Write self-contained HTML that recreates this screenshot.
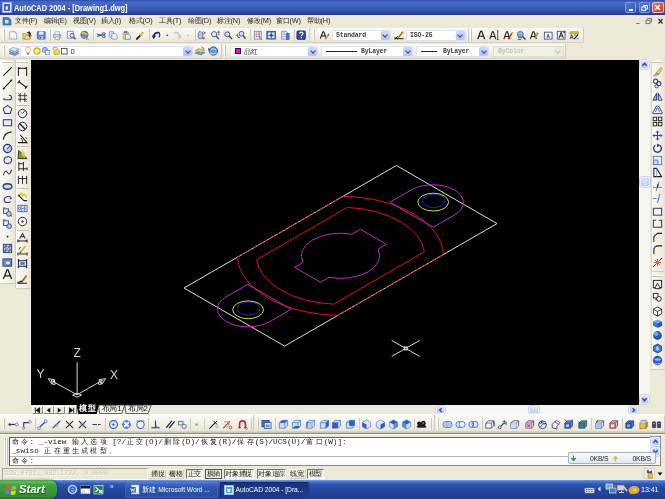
<!DOCTYPE html>
<html>
<head>
<meta charset="utf-8">
<title>AutoCAD 2004 - [Drawing1.dwg]</title>
<style>
*{margin:0;padding:0;box-sizing:border-box}
html,body{width:665px;height:499px;overflow:hidden;background:#ece9d8}
body{position:relative;font-family:"Liberation Sans",sans-serif;font-size:8px;color:#000}
.abs{position:absolute}
#w{position:absolute;left:0;top:0;width:665px;height:499px;will-change:transform;filter:blur(0.5px)}
svg{position:absolute;overflow:visible}
#title{left:0;top:0;width:665px;height:15px;background:linear-gradient(#2c4ca8 0%,#4468c6 12%,#4466c4 30%,#3659b6 60%,#2b4ba5 85%,#1d378a 100%)}
#title .t{left:14px;top:2px;color:#fff;font-weight:bold;font-size:9.6px;line-height:11px;white-space:nowrap;transform:scaleX(0.775);transform-origin:0 0}
#menubar{left:0;top:15px;width:665px;height:12px;background:#ece9d8}
#menubar span{position:absolute;top:1px;font-size:7.3px;line-height:10px;white-space:nowrap;letter-spacing:-0.2px;color:#222}
.grip{position:absolute;width:2px;border-left:1px solid #fff;border-right:1px solid #c6c3b2}
.gripH{position:absolute;height:2px;border-top:1px solid #fff;border-bottom:1px solid #c6c3b2}
.sep{position:absolute;width:1px;background:#cfccbc}
.sepH{position:absolute;height:1px;background:#c5c2b2}
.combo{position:absolute;background:#fff;border:1px solid #dde4f0;color:#333;height:11px;font-size:6.5px;line-height:9px;white-space:nowrap}
.combo .arr{position:absolute;right:0;top:0;width:9px;height:9px;background:linear-gradient(#cbd9fb,#b1c6f7);border-radius:1.5px}
.combo .arr:after{content:"";position:absolute;left:2.5px;top:2px;width:3px;height:3px;border-right:1.2px solid #34458a;border-bottom:1.2px solid #34458a;transform:rotate(45deg)}
.combo.dis{background:#f3f1e7;border-color:#dedbcc}
.combo.dis .arr{background:#ebe9de}
.combo.dis .arr:after{border-color:#c5c2b2}
.band{position:absolute;background:linear-gradient(#fbfaf6 0%,#f3f1e8 50%,#e8e5d5 100%);border-right:1px solid #cfccbc;border-bottom:1px solid #d5d2c2;border-radius:0 1px 1px 0}
.mono{font-family:"Liberation Mono",monospace}
.combo .mono{font-weight:bold;color:#3c3c3c;letter-spacing:-0.15px}
#canvas{left:31px;top:59.6px;width:608px;height:345px;background:#000;overflow:hidden}
.ucs{color:#d8d8d8;font-size:12px;line-height:12px;width:10px;text-align:center}
#tabsrow{left:31px;top:405px;width:608px;height:9px;background:#ece9d8}
.sbtn{position:absolute;background:linear-gradient(#cfdcfd,#b4c8f6);border:1px solid #eef3ff;border-radius:2px;box-shadow:0 0 0 0.5px #9db0dc}
#cmd{left:9px;top:436.7px;width:641px;height:29px;background:#fff;border:1px solid #8a887c;border-left:1.6px solid #55554f;border-top:1.2px solid #66665f;border-right:none;overflow:hidden}
#cmd div{position:absolute;left:1.2px;font-size:7.67px;line-height:9px;white-space:nowrap;color:#1a1a1a}
#status{left:0;top:466px;width:665px;height:14px}
.sb{position:absolute;top:2.5px;height:10.5px;font-size:6.9px;line-height:8.5px;text-align:center;white-space:nowrap;border:1px solid;border-color:#f6f5ee #d5d2c3 #d5d2c3 #f6f5ee;color:#222}
.sb.on{border-color:#77756a #fbfaf5 #fbfaf5 #77756a;background:#f3f1e8}
.sb.on2{border-color:#55534a;background:#f3f1e8}
#taskbar{left:0;top:480px;width:665px;height:19px;background:linear-gradient(#7f9ee2 0%,#5078ce 8%,#3059b8 20%,#27489f 45%,#234294 75%,#1f3b88 100%)}
#start{left:0;top:0;width:56.5px;height:19px;border-radius:0 7px 7px 0;background:linear-gradient(#4a9c4a 0%,#62bc62 10%,#40a240 25%,#389838 60%,#318a31 88%,#287228 100%);box-shadow:1px 0 2px #1a3f8a}
#start span{position:absolute;left:19px;top:2.5px;color:#fff;font-weight:bold;font-style:italic;font-size:11.5px;line-height:13px;text-shadow:0.5px 0.5px 1px #1a4a1a;letter-spacing:-0.1px}
.task{position:absolute;top:2px;height:15.5px;border-radius:2px;color:#fff;font-size:6.7px;line-height:15px;white-space:nowrap;overflow:hidden;padding-left:16.5px;letter-spacing:-0.05px}
</style>
</head>
<body>
<div id="w">
<div id="title" class="abs">
<svg style="left:2px;top:2px" width="10" height="11" viewBox="0 0 10 11"><rect x="0.5" y="0.5" width="9" height="10" fill="#e8eef8" stroke="#9fb3dd" stroke-width="0.6"/><rect x="2" y="2" width="6" height="7" fill="#3b62b8"/><path d="M3.6 4.3 h2.4 v3.3 h-2.4 z" fill="#dfe8f8"/></svg>
<div class="t abs">AutoCAD 2004 - [Drawing1.dwg]</div>
<div class="abs" style="left:625px;top:2px;width:11px;height:11px;border-radius:2px;background:linear-gradient(135deg,#4f78d4,#3158bc);border:0.6px solid rgba(225,235,255,0.38)"></div><div class="abs" style="left:628.5px;top:9px;width:4px;height:1.6px;background:#fff"></div>
<div class="abs" style="left:639px;top:2px;width:11px;height:11px;border-radius:2px;background:linear-gradient(135deg,#4f78d4,#3158bc);border:0.6px solid rgba(225,235,255,0.38)"></div>
<svg style="left:639px;top:2px" width="11" height="11" viewBox="0 0 11 11" fill="none" stroke="#fff" stroke-width="1"><path d="M4.5 3.5 h4 v3.5 h-1.3 M4.5 3.5 v1.3"/><rect x="2.7" y="5" width="4" height="3.3"/></svg>
<div class="abs" style="left:652px;top:1.7px;width:11.6px;height:11.8px;border-radius:2px;background:linear-gradient(135deg,#e8705a,#cc3a20);border:0.6px solid rgba(255,225,215,0.75)"></div>
<svg style="left:652.3px;top:2.1px" width="11" height="11" viewBox="0 0 11 11" fill="none" stroke="#fff" stroke-width="1.6"><path d="M3 3 L8 8 M8 3 L3 8"/></svg>
</div>
<div id="menubar" class="abs">
<svg style="left:2px;top:1px" width="10" height="10" viewBox="0 0 10 10"><path d="M1 1.5 h5.5 l2.5 2.2 v5.3 h-8 z" fill="#3f79c8" stroke="#2a5aa0" stroke-width="0.6"/><path d="M3 4 h3.5 v3.5 h-3.5 z" fill="#cfe2f8"/></svg>
<span style="left:15px"><i style="display:inline-block;font-style:normal;text-align:center;vertical-align:top;width:6.8px">文</i><i style="display:inline-block;font-style:normal;text-align:center;vertical-align:top;width:6.8px">件</i>(F)</span>
<span style="left:44px"><i style="display:inline-block;font-style:normal;text-align:center;vertical-align:top;width:6.8px">编</i><i style="display:inline-block;font-style:normal;text-align:center;vertical-align:top;width:6.8px">辑</i>(E)</span>
<span style="left:73px"><i style="display:inline-block;font-style:normal;text-align:center;vertical-align:top;width:6.8px">视</i><i style="display:inline-block;font-style:normal;text-align:center;vertical-align:top;width:6.8px">图</i>(V)</span>
<span style="left:101px"><i style="display:inline-block;font-style:normal;text-align:center;vertical-align:top;width:6.8px">插</i><i style="display:inline-block;font-style:normal;text-align:center;vertical-align:top;width:6.8px">入</i>(I)</span>
<span style="left:129px"><i style="display:inline-block;font-style:normal;text-align:center;vertical-align:top;width:6.8px">格</i><i style="display:inline-block;font-style:normal;text-align:center;vertical-align:top;width:6.8px">式</i>(O)</span>
<span style="left:159px"><i style="display:inline-block;font-style:normal;text-align:center;vertical-align:top;width:6.8px">工</i><i style="display:inline-block;font-style:normal;text-align:center;vertical-align:top;width:6.8px">具</i>(T)</span>
<span style="left:188px"><i style="display:inline-block;font-style:normal;text-align:center;vertical-align:top;width:6.8px">绘</i><i style="display:inline-block;font-style:normal;text-align:center;vertical-align:top;width:6.8px">图</i>(D)</span>
<span style="left:217px"><i style="display:inline-block;font-style:normal;text-align:center;vertical-align:top;width:6.8px">标</i><i style="display:inline-block;font-style:normal;text-align:center;vertical-align:top;width:6.8px">注</i>(N)</span>
<span style="left:247px"><i style="display:inline-block;font-style:normal;text-align:center;vertical-align:top;width:6.8px">修</i><i style="display:inline-block;font-style:normal;text-align:center;vertical-align:top;width:6.8px">改</i>(M)</span>
<span style="left:276px"><i style="display:inline-block;font-style:normal;text-align:center;vertical-align:top;width:6.8px">窗</i><i style="display:inline-block;font-style:normal;text-align:center;vertical-align:top;width:6.8px">口</i>(W)</span>
<span style="left:307px"><i style="display:inline-block;font-style:normal;text-align:center;vertical-align:top;width:6.8px">帮</i><i style="display:inline-block;font-style:normal;text-align:center;vertical-align:top;width:6.8px">助</i>(H)</span>
<svg style="left:633px;top:2px" width="32" height="9" viewBox="0 0 32 9" fill="none" stroke="#555" stroke-width="1"><path d="M3 6.5 h3.5" stroke="#777"/><path d="M14.5 1.5 h4 v3.5 h-1 M14.5 1.5 v1.2" stroke="#777"/><rect x="13" y="3.3" width="4" height="3.3" stroke="#777"/><path d="M25.5 2 L29.5 6.5 M29.5 2 L25.5 6.5" stroke="#333" stroke-width="1.2"/></svg>
</div>
<div class="band" style="left:0.0px;top:27.5px;width:310.0px;height:15.0px"></div>
<div class="band" style="left:311.0px;top:27.5px;width:158.0px;height:15.0px"></div>
<div class="band" style="left:469.0px;top:27.5px;width:115.0px;height:15.0px"></div>
<div class="band" style="left:0.0px;top:43.5px;width:222.0px;height:15.5px"></div>
<div class="band" style="left:223.0px;top:43.5px;width:342.5px;height:15.5px"></div>
<div class="grip" style="left:3px;top:29px;height:12px"></div>
<svg style="left:8.3px;top:30.0px" width="10.4" height="10.4" viewBox="0 0 12 12" fill="none"><path d="M2 2 h6 l2 2 v6.5 h-8 z" fill="#fdfeff" stroke="#7d9fd8" stroke-width="0.9"/><path d="M3 8.5 h6 v1.5 h-6 z" fill="#c9daf4"/><path d="M8 2 v2 h2" stroke="#7d9fd8" stroke-width="0.6"/></svg>
<svg style="left:22.3px;top:30.0px" width="10.4" height="10.4" viewBox="0 0 12 12" fill="none"><path d="M1 4 h3 l1 1 h4.5 v5.5 h-8.5 z" fill="#ecd27a" stroke="#a08a3c" stroke-width="0.8"/><path d="M2.5 10.3 l2 -4 h6.5 l-2 4 z" fill="#f6e6a4" stroke="#a08a3c" stroke-width="0.7"/><path d="M5 3 l4 -1.5 l1.5 3 l-1.5 4.5 l-1.5 -2 l1 -2.5 z" fill="#3a3428"/></svg>
<svg style="left:35.8px;top:30.0px" width="10.4" height="10.4" viewBox="0 0 12 12" fill="none"><path d="M1.5 2 h9 v8.5 h-8 l-1 -1 z" fill="#5f88d0" stroke="#3a5a9c" stroke-width="0.9"/><rect x="3.3" y="1.8" width="5.4" height="3.6" fill="#e9f0fb"/><rect x="4" y="7.3" width="4.3" height="3" fill="#b9cdf0"/><rect x="4.7" y="7.9" width="1.2" height="2" fill="#27478e"/></svg>
<svg style="left:52.3px;top:30.0px" width="10.4" height="10.4" viewBox="0 0 12 12" fill="none"><path d="M3.5 5 v-3 h5 v3" fill="#fff" stroke="#8c9cb8" stroke-width="0.8"/><rect x="1.8" y="5" width="8.4" height="3.8" rx="0.8" fill="#d3dcec" stroke="#6a7ca8" stroke-width="0.8"/><path d="M3.5 8 h5 v2.8 h-5 z" fill="#fff" stroke="#6b7c98" stroke-width="0.7"/><circle cx="9" cy="6.4" r="0.6" fill="#3a9a3a"/></svg>
<svg style="left:65.8px;top:30.0px" width="10.4" height="10.4" viewBox="0 0 12 12" fill="none"><path d="M1.5 1.5 h7 v8 h-7 z" fill="#f4f8ff" stroke="#5b84c9" stroke-width="0.9"/><circle cx="7" cy="6.3" r="2.4" fill="#cfe0f8" stroke="#2b4a8c" stroke-width="0.9"/><path d="M8.8 8.2 l2.2 2.5" stroke="#2b4a8c" stroke-width="1.4"/></svg>
<svg style="left:78.8px;top:30.0px" width="10.4" height="10.4" viewBox="0 0 12 12" fill="none"><circle cx="6.3" cy="5.6" r="4.2" fill="#5d8fdc" stroke="#2b4a8c" stroke-width="0.8"/><path d="M3 4 q2 -2 4 0 q1.5 1.5 3 0.5" stroke="#f0c040" stroke-width="1.6"/><path d="M2.5 8 q3 1.5 5 -0.5" stroke="#e8803a" stroke-width="1.6"/><path d="M6 8 l5 2.5 l-3 0.5 z" fill="#fff" stroke="#2b4a8c" stroke-width="0.5"/></svg>
<svg style="left:95.8px;top:30.0px" width="10.4" height="10.4" viewBox="0 0 12 12" fill="none"><path d="M1 4.5 l6 2 M1 7.5 l6 -2" stroke="#1d3a7a" stroke-width="1.1"/><ellipse cx="9" cy="4.4" rx="1.7" ry="1.2" stroke="#1d3a7a" stroke-width="1"/><ellipse cx="9" cy="7.6" rx="1.7" ry="1.2" stroke="#1d3a7a" stroke-width="1"/></svg>
<svg style="left:108.3px;top:30.0px" width="10.4" height="10.4" viewBox="0 0 12 12" fill="none"><path d="M1.5 2 h5 v6 h-5 z" fill="#dbe7fa" stroke="#6a90d4" stroke-width="0.9"/><path d="M4.5 4.2 h4 l2 1.6 v4.7 h-6 z" fill="#f6f9ff" stroke="#6a90d4" stroke-width="0.9"/></svg>
<svg style="left:120.8px;top:30.0px" width="10.4" height="10.4" viewBox="0 0 12 12" fill="none"><path d="M2.5 3 h6.5 v7.5 h-6.5 z" fill="#ead48a" stroke="#a8985c" stroke-width="0.8"/><rect x="4" y="1.3" width="3" height="2" fill="#8c94a4" stroke="#4c5464" stroke-width="0.5"/><path d="M5 5 h4 l1.7 1.4 v4.3 h-5.7 z" fill="#eef4ff" stroke="#4a74c0" stroke-width="0.8"/></svg>
<svg style="left:134.8px;top:30.0px" width="10.4" height="10.4" viewBox="0 0 12 12" fill="none"><path d="M2 10.5 l4.2 -4.2" stroke="#1a1a1a" stroke-width="2"/><path d="M6 6.5 l3.5 -4" stroke="#d8b040" stroke-width="2.2"/><path d="M1.5 11 l1.5 -1.5" stroke="#1a1a1a" stroke-width="1.2"/></svg>
<svg style="left:150.8px;top:30.0px" width="10.4" height="10.4" viewBox="0 0 12 12" fill="none"><path d="M3.2 8.5 q-0.5 -6 6.3 -5.5" stroke="#1a2a5e" stroke-width="2"/><path d="M0.8 6.3 l2.4 4.3 l2.6 -4.3 z" fill="#1a2a5e"/><path d="M9.3 3 q1.8 2.5 0 5.5" stroke="#1a2a5e" stroke-width="1.3"/></svg>
<svg style="left:161.8px;top:30.0px" width="10.4" height="10.4" viewBox="0 0 12 12" fill="none"><path d="M4.5 5.5 h3 l-1.5 1.8 z" fill="#222"/></svg>
<svg style="left:172.3px;top:30.0px" width="10.4" height="10.4" viewBox="0 0 12 12" fill="none"><path d="M9 8.5 q0.5 -6 -6.5 -5.5" stroke="#c9c7ba" stroke-width="1.8"/><path d="M11.2 6.5 l-2.4 4 l-2.4 -4 z" fill="#c9c7ba"/></svg>
<svg style="left:183.3px;top:30.0px" width="10.4" height="10.4" viewBox="0 0 12 12" fill="none"><path d="M4.5 5.5 h3 l-1.5 1.8 z" fill="#b8b5a6"/></svg>
<svg style="left:196.3px;top:30.0px" width="10.4" height="10.4" viewBox="0 0 12 12" fill="none"><path d="M2.5 6 q0 -3 1.2 -3 v-1 q1 -0.8 1.5 0.3 q1 -0.8 1.5 0.4 q1.2 -0.4 1.3 1 v4 q0 2.5 -2.5 2.5 h-1 q-1.5 0 -2 -2 z" fill="#b8c8ea" stroke="#3a4a8c" stroke-width="0.8"/><path d="M8.5 2 l2.5 1.3 l-2.5 1.3" stroke="#cc2a2a" stroke-width="1"/><path d="M9 8 v3 M7.5 9.5 h3" stroke="#cc2a2a" stroke-width="0.9"/></svg>
<svg style="left:209.8px;top:30.0px" width="10.4" height="10.4" viewBox="0 0 12 12" fill="none"><circle cx="4.8" cy="4.8" r="3" fill="#e6eefb" stroke="#2b4a8c" stroke-width="1"/><path d="M7 7 l3.3 3.5" stroke="#2b4a8c" stroke-width="1.5"/><path d="M8.5 2.5 h3 M10 1 v3" stroke="#3a3a3a" stroke-width="0.8"/><path d="M8.8 5.5 h2.5" stroke="#3a3a3a" stroke-width="0.8"/></svg>
<svg style="left:223.3px;top:30.0px" width="10.4" height="10.4" viewBox="0 0 12 12" fill="none"><rect x="1" y="1" width="6" height="5" stroke="#7a8ab0" stroke-width="0.6" stroke-dasharray="1 1"/><circle cx="5" cy="5" r="2.8" fill="#d3e2f8" stroke="#2b4a8c" stroke-width="1"/><path d="M7 7 l3.5 3.5" stroke="#2b4a8c" stroke-width="1.6"/></svg>
<svg style="left:236.3px;top:30.0px" width="10.4" height="10.4" viewBox="0 0 12 12" fill="none"><circle cx="6.3" cy="4.3" r="2.8" fill="#d3e2f8" stroke="#2b4a8c" stroke-width="1"/><path d="M8.2 6.3 l2.7 3.8" stroke="#2b4a8c" stroke-width="1.6"/><path d="M1 5.5 q0.5 4 4 3.5" stroke="#2b4a8c" stroke-width="1"/><path d="M0.5 6.5 l1 -2 l1.5 1.8" fill="#2b4a8c"/></svg>
<svg style="left:253.3px;top:30.0px" width="10.4" height="10.4" viewBox="0 0 12 12" fill="none"><rect x="1.5" y="1.5" width="8" height="9" fill="#f4f7fd" stroke="#5870a8" stroke-width="0.8"/><path d="M3 3.5 h2 M3 5.5 h2 M3 7.5 h2" stroke="#cc3a3a" stroke-width="1"/><path d="M6 3.5 h2.5 M6 5.5 h2.5 M6 7.5 h2.5" stroke="#3a5ab0" stroke-width="1"/><path d="M7 8 l3.5 3" stroke="#b89020" stroke-width="1.4"/></svg>
<svg style="left:266.3px;top:30.0px" width="10.4" height="10.4" viewBox="0 0 12 12" fill="none"><rect x="1" y="1.5" width="10" height="9" fill="#4d78c8" stroke="#23407c" stroke-width="0.8"/><path d="M2.5 3 h3 v3 h-3 z M6.8 3 h3 v3 h-3 z M2.5 7 h3 v2.5 h-3 z M6.8 7 h3 v2.5 h-3 z" fill="#dce8fa"/><circle cx="6.2" cy="6.2" r="1.6" fill="#23407c"/></svg>
<svg style="left:279.8px;top:30.0px" width="10.4" height="10.4" viewBox="0 0 12 12" fill="none"><path d="M2 1.5 h5 l1.5 1.5 v7.5 h-6.5 z" fill="#f4f7fd" stroke="#5870a8" stroke-width="0.8"/><path d="M3 3.5 h3 M3 5.5 h4 M3 7.5 h4" stroke="#7a98d0" stroke-width="0.9"/><rect x="7.5" y="4" width="3" height="7" fill="#4d78c8" stroke="#23407c" stroke-width="0.6"/></svg>
<svg style="left:296.3px;top:30.0px" width="10.4" height="10.4" viewBox="0 0 12 12" fill="none"><rect x="1" y="1" width="10" height="10" rx="1.5" fill="#2a4a9c" stroke="#1b3070" stroke-width="0.8"/><path d="M4.2 4.4 q0 -1.9 1.9 -1.9 q1.9 0 1.9 1.6 q0 1 -1.1 1.6 q-0.7 0.4 -0.7 1.4" stroke="#fff" stroke-width="1.4"/><circle cx="6.1" cy="9" r="0.85" fill="#fff"/></svg>
<div class="sep" style="left:49.5px;top:29px;height:12px"></div>
<div class="sep" style="left:92.5px;top:29px;height:12px"></div>
<div class="sep" style="left:148.5px;top:29px;height:12px"></div>
<div class="sep" style="left:194.5px;top:29px;height:12px"></div>
<div class="sep" style="left:250.0px;top:29px;height:12px"></div>
<div class="sep" style="left:293.5px;top:29px;height:12px"></div>
<div class="grip" style="left:313px;top:29px;height:12px"></div>
<svg style="left:319.3px;top:30.0px" width="10.4" height="10.4" viewBox="0 0 12 12" fill="none"><path d="M1.5 10 l3 -8 h1 l3 8 M3 7 h4" stroke="#1a1a1a" stroke-width="1.2"/><path d="M7 10.5 l4 -5" stroke="#c89828" stroke-width="1.6"/><path d="M10.5 6.2 l0.9 -1.8" stroke="#555" stroke-width="1.2"/></svg>
<div class="combo " style="left:332.0px;top:29.5px;width:58.5px"><span class="mono" style="position:absolute;left:3px;top:0">Standard</span><div class="arr"></div></div>
<svg style="left:393.8px;top:30.0px" width="10.4" height="10.4" viewBox="0 0 12 12" fill="none"><path d="M1 10 h10 M1 10 l3.5 -2.5 l1 1 l4.5 -6.5" stroke="#1a1a1a" stroke-width="1.1"/><path d="M6 7.5 l4.5 -5.5" stroke="#a88018" stroke-width="1.8"/><path d="M1 8 v3 M4 9 v2" stroke="#1a1a1a" stroke-width="0.8"/></svg>
<div class="combo " style="left:406.0px;top:29.5px;width:59.5px"><span class="mono" style="position:absolute;left:3px;top:0">ISO-25</span><div class="arr"></div></div>
<div class="grip" style="left:470px;top:29px;height:12px"></div>
<svg style="left:476.3px;top:30.0px" width="10.4" height="10.4" viewBox="0 0 12 12" fill="none"><path d="M2 10.5 l3.3 -9 h1.4 l3.3 9 M3.6 7.2 h4.8" stroke="#1a1a1a" stroke-width="1.4"/></svg>
<svg style="left:488.8px;top:30.0px" width="10.4" height="10.4" viewBox="0 0 12 12" fill="none"><path d="M1 10.5 l2.8 -8.5 h1.2 l2.8 8.5 M2.4 7.4 h4" stroke="#1a1a1a" stroke-width="1.2"/><path d="M10 1 v10 M9 1 h2 M9 11 h2" stroke="#1a1a1a" stroke-width="0.8"/></svg>
<svg style="left:502.8px;top:30.0px" width="10.4" height="10.4" viewBox="0 0 12 12" fill="none"><path d="M1 10.5 l3 -8.5 h1.2 l2.8 8.5 M2.6 7.4 h4" stroke="#1a1a1a" stroke-width="1.2"/><path d="M6 10.5 l4.5 -7" stroke="#c82a1a" stroke-width="1.5"/><path d="M10.5 3.8 l0.8 -1.6" stroke="#d8a828" stroke-width="1.4"/></svg>
<svg style="left:516.3px;top:30.0px" width="10.4" height="10.4" viewBox="0 0 12 12" fill="none"><circle cx="5" cy="5" r="3.4" fill="#7fb0e0" stroke="#3a5a9c" stroke-width="0.9"/><path d="M3 4.5 q2 -2 4 0.5" stroke="#e8c040" stroke-width="1.2"/><path d="M7.5 7.5 l3.5 3.5" stroke="#2b3a6c" stroke-width="1.6"/><path d="M2 9 h5 M2 11 h4" stroke="#1a1a1a" stroke-width="0.7"/></svg>
<svg style="left:529.3px;top:30.0px" width="10.4" height="10.4" viewBox="0 0 12 12" fill="none"><path d="M1.5 10.5 l3 -8.5 h1.2 l2.8 8.5 M3 7.4 h4" stroke="#1a1a1a" stroke-width="1.2"/><path d="M6.5 9.5 l4 -5.5" stroke="#b88a18" stroke-width="1.5"/><path d="M7 5 q2 -3 4 -1" stroke="#3a5ab0" stroke-width="0.8"/></svg>
<svg style="left:542.8px;top:30.0px" width="10.4" height="10.4" viewBox="0 0 12 12" fill="none"><rect x="1.5" y="2.5" width="9" height="8" fill="#f4f7fd" stroke="#23407c" stroke-width="0.9"/><path d="M4.5 9 l1.5 -4 l1.5 4 M5 7.8 h2" stroke="#1a1a1a" stroke-width="0.8"/></svg>
<svg style="left:556.3px;top:30.0px" width="10.4" height="10.4" viewBox="0 0 12 12" fill="none"><rect x="1.5" y="1.5" width="9" height="9" fill="#f4f7fd" stroke="#23407c" stroke-width="0.9"/><path d="M3.5 9.5 l2.5 -7 l2.5 7 M4.5 7 h3" stroke="#1a1a1a" stroke-width="1.1"/><rect x="8.5" y="1" width="2.5" height="2.5" fill="#3a5ab0"/></svg>
<svg style="left:569.3px;top:30.0px" width="10.4" height="10.4" viewBox="0 0 12 12" fill="none"><path d="M1 2 h10 v2.5 h-10 z" fill="#d8c040" stroke="#8a7818" stroke-width="0.6"/><path d="M1 10.5 l2 -5 l2 5 M2 9 h2" stroke="#1a1a1a" stroke-width="0.9"/><path d="M6 10.5 l4.5 -5.5" stroke="#1a1a1a" stroke-width="1.3"/><path d="M6 6 h2 M9 10 h2" stroke="#3a5ab0" stroke-width="1"/></svg>
<div class="grip" style="left:3px;top:45px;height:12px"></div>
<svg style="left:7.5px;top:45.0px" width="12" height="12" viewBox="0 0 12 12" fill="none"><path d="M1 8.5 l4 -2 l6 1.5 l-4 2.5 z" fill="#7a9ad8" stroke="#3a5a9c" stroke-width="0.5"/><path d="M1 6.5 l4 -2 l6 1.5 l-4 2.5 z" fill="#a8c0ec" stroke="#3a5a9c" stroke-width="0.5"/><path d="M1 4.5 l4 -2 l6 1.5 l-4 2.5 z" fill="#dce6f8" stroke="#5a7ab8" stroke-width="0.5"/></svg>
<div class="combo " style="left:20.0px;top:45.5px;width:173.0px"><svg style="left:1.5px;top:-0.5px" width="10" height="10" viewBox="0 0 12 12" fill="none"><path d="M6 1.2 q3 0 3 2.8 q0 1.5 -1.2 2.6 v1.4 h-3.6 v-1.4 q-1.2 -1.1 -1.2 -2.6 q0 -2.8 3 -2.8 z" fill="#fffbe0" stroke="#b8a040" stroke-width="0.7"/><rect x="4.6" y="8.2" width="2.8" height="2.3" fill="#8a8a8a"/></svg><svg style="left:10.8px;top:-0.5px" width="10" height="10" viewBox="0 0 12 12" fill="none"><circle cx="6" cy="6" r="4" fill="#f6e040" stroke="#a89018" stroke-width="0.9"/><circle cx="6" cy="6" r="1.8" fill="#fbf4a0"/></svg><svg style="left:19.8px;top:-0.5px" width="10" height="10" viewBox="0 0 12 12" fill="none"><circle cx="4.8" cy="4.8" r="3.3" fill="#a8c0e8" stroke="#5a78b8" stroke-width="0.8"/><rect x="5.5" y="5.5" width="5" height="5" fill="#e4ecf8" stroke="#5a78b8" stroke-width="0.7"/></svg><svg style="left:29.8px;top:-0.5px" width="10" height="10" viewBox="0 0 12 12" fill="none"><path d="M2 4.5 q0 -3 3 -3 q2.5 0 2.8 2" stroke="#a89018" stroke-width="1.1"/><rect x="3.5" y="4.5" width="6.5" height="6" rx="1" fill="#f0d850" stroke="#a89018" stroke-width="0.8"/></svg><svg style="left:39.4px;top:0.5px" width="8.5" height="8.5" viewBox="0 0 12 12" fill="none"><rect x="2" y="2" width="8" height="8" fill="#fff" stroke="#4a4a4a" stroke-width="1.3"/></svg><span style="position:absolute;left:49.5px;top:0;font-size:7.5px;color:#222">0</span><div class="arr"></div></div>
<svg style="left:194.0px;top:45.0px" width="12" height="12" viewBox="0 0 12 12" fill="none"><path d="M1 8 l4 -2 l6 1.5 l-4 2.5 z" fill="#7a9ad8" stroke="#3a5a9c" stroke-width="0.5"/><path d="M1 5.5 l4 -2 l6 1.5 l-4 2.5 z" fill="#e0d060" stroke="#8a8020" stroke-width="0.5"/><path d="M7 1 l3.5 2.5 l-1.5 0.3 z" fill="#2b4a8c"/></svg>
<svg style="left:207.0px;top:45.0px" width="12" height="12" viewBox="0 0 12 12" fill="none"><circle cx="6.5" cy="6" r="4.2" fill="#6d96d8" stroke="#2b4a8c" stroke-width="0.8"/><path d="M3 5 q3 -3 6 0 M3 8 q3 2 6.5 0" stroke="#cfe0f8" stroke-width="1"/><path d="M1 3 l3 1.5 l-2.5 1.5 z" fill="#2b4a8c"/></svg>
<div class="grip" style="left:224px;top:45px;height:12px"></div>
<div class="combo " style="left:230.0px;top:45.5px;width:88.0px"><div style="position:absolute;left:4px;top:1.5px;width:6px;height:6px;background:#d81ad8;border:0.7px solid #3a0a3a"></div><span style="position:absolute;left:13px;top:0;font-size:7px;color:#222"><i style="display:inline-block;font-style:normal;text-align:center;vertical-align:top;width:6.6px">品</i><i style="display:inline-block;font-style:normal;text-align:center;vertical-align:top;width:6.6px">红</i></span><div class="arr"></div></div>
<div class="combo " style="left:321.0px;top:45.5px;width:92.0px"><div style="position:absolute;left:4px;top:4.2px;width:31px;height:0.8px;background:#222"></div><span class="mono" style="position:absolute;left:39px;top:0">ByLayer</span><div class="arr"></div></div>
<div class="combo " style="left:416.0px;top:45.5px;width:73.0px"><div style="position:absolute;left:4px;top:4.2px;width:16px;height:0.8px;background:#222"></div><span class="mono" style="position:absolute;left:26px;top:0">ByLayer</span><div class="arr"></div></div>
<div class="combo dis" style="left:493.0px;top:45.5px;width:70.5px"><span class="mono" style="position:absolute;left:4px;top:0;color:#c4c1b1">ByColor</span><div class="arr"></div></div>
<div id="canvas" class="abs"><svg class="abs" style="left:0;top:0" width="608" height="346" viewBox="0 0 608 346" fill="none" stroke-width="1">
<path d="M253.6,286.1 L466.0,163.6 L365.4,105.5 L153.0,228.0 Z" stroke="#dcdcdc"/>
<path d="M412.4,194.5 A102.87,59.40 0 0,0 311.7,136.4" stroke="#dc1028"/>
<path d="M206.6,197.1 A102.87,59.40 0 0,0 307.3,255.2" stroke="#dc1028"/>
<path d="M206.6,197.1 L311.7,136.4 M307.3,255.2 L412.4,194.5" stroke="#dc1028" stroke-dasharray="3 1.5"/>
<path d="M393.4,191.8 A84.14,48.58 0 0,0 316.4,147.4 L225.6,199.8 A84.14,48.58 0 0,0 302.6,244.2 Z" stroke="#dc1028"/>
<path d="M321.0,174.2 L329.4,169.3 L355.4,184.3 L347.0,189.2 A39.19,22.63 0 0,1 298.0,217.4 L289.6,222.3 L263.6,207.3 L272.0,202.4 A39.19,22.63 0 0,1 321.0,174.2 Z" stroke="#c628c6"/>
<path d="M358.9,142.3 L380.5,129.8 A30.62,17.68 0 0,1 423.8,154.8 L402.2,167.3 Z" stroke="#c628c6"/>
<ellipse cx="402.7" cy="140.9" rx="11.4" ry="6.6" stroke="#2424b8"/>
<ellipse cx="402.2" cy="142.1" rx="15.4" ry="8.9" stroke="#d8d83c"/>
<path d="M260.1,249.3 L238.5,261.8 A30.62,17.68 0 0,1 195.2,236.8 L216.8,224.3 Z" stroke="#c628c6"/>
<ellipse cx="217.6" cy="248.6" rx="11.4" ry="6.6" stroke="#2424b8"/>
<ellipse cx="217.1" cy="249.8" rx="15.4" ry="8.9" stroke="#d8d83c"/>
<path d="M360.7,280.4 L388.7,296.4 M360.7,296.4 L388.7,280.4" stroke="#d8d8d8"/>
<rect x="373.2" y="286.9" width="3" height="3" stroke="#e8e8e8" fill="#777"/>
<path d="M46.1,334.8 L46.1,302.4 M46.1,334.8 L69.7,321.3 M46.1,334.8 L21.6,321.3" stroke="#d8d8d8"/>
<path d="M41.6,335.1 l4.5,-2 l4.5,2 l-4.5,2 z" stroke="#d8d8d8"/>
<path d="M74.5,318.6 l-6.5,1.2 l2.8,4.6 z" stroke="#d8d8d8"/>
<ellipse cx="69.3" cy="322.1" rx="1.4" ry="2.6" transform="rotate(28 69.3 322.1)" stroke="#d8d8d8"/>
<path d="M17.2,318.6 l6.5,1.2 l-2.8,4.6 z" stroke="#d8d8d8"/>
<ellipse cx="22.4" cy="322.1" rx="1.4" ry="2.6" transform="rotate(-28 22.4 322.1)" stroke="#d8d8d8"/>
</svg>
<div class="abs ucs" style="left:41.2px;top:287.0px">Z</div><div class="abs ucs" style="left:78.0px;top:309.0px">X</div><div class="abs ucs" style="left:4.6px;top:308.0px">Y</div></div>
<div class="abs" style="left:0.0px;top:59.5px;width:14.5px;height:224.0px;background:linear-gradient(90deg,#fbfaf6 0%,#f3f1e8 50%,#e9e6d7 100%);border-bottom:1px solid #d0cdbd"></div>
<div class="abs" style="left:15.5px;top:59.5px;width:15.0px;height:229.0px;background:linear-gradient(90deg,#fbfaf6 0%,#f3f1e8 50%,#e9e6d7 100%);border-bottom:1px solid #d0cdbd"></div>
<div class="abs" style="left:651.0px;top:59.5px;width:14.0px;height:310.0px;background:linear-gradient(90deg,#fbfaf6 0%,#f3f1e8 50%,#e9e6d7 100%);border-bottom:1px solid #d0cdbd"></div>
<div class="gripH" style="left:2px;top:61px;width:11px"></div><div class="gripH" style="left:17px;top:61px;width:11px"></div>
<div class="sep" style="left:14.5px;top:60px;height:228px;background:#d0cdbd"></div><div class="sep" style="left:15.5px;top:60px;height:228px;background:#fff"></div>
<svg style="left:1.8px;top:65.7px" width="11" height="11" viewBox="0 0 12 12" fill="none"><path d="M1.5 10.5 L10.5 1.5" stroke="#1c1c1c" stroke-width="1.1"/></svg>
<svg style="left:1.8px;top:78.9px" width="11" height="11" viewBox="0 0 12 12" fill="none"><path d="M1 11 L11 1" stroke="#1c1c1c" stroke-width="1.1"/><path d="M1 11 l2.5 -0.8 M11 1 l-2.5 0.8" stroke="#1c1c1c" stroke-width="0.9"/></svg>
<svg style="left:1.8px;top:91.5px" width="11" height="11" viewBox="0 0 12 12" fill="none"><path d="M2 8.5 h6 q2.5 0 2.5 -2.5 q0 -2.5 -2.5 -2.5 h-0.5" stroke="#2c3a72" stroke-width="1.2"/><path d="M2 8.5 v-2" stroke="#2c3a72" stroke-width="1.2"/></svg>
<svg style="left:1.8px;top:104.2px" width="11" height="11" viewBox="0 0 12 12" fill="none"><path d="M6 1.5 L10.7 5 L9 10.3 H3 L1.3 5 Z" stroke="#2c3a72" stroke-width="1.1" fill="#e8eefa"/></svg>
<svg style="left:1.8px;top:116.9px" width="11" height="11" viewBox="0 0 12 12" fill="none"><rect x="1.5" y="3" width="9" height="6.5" stroke="#2c3a72" stroke-width="1.1" fill="#e8eefa"/></svg>
<svg style="left:1.8px;top:129.5px" width="11" height="11" viewBox="0 0 12 12" fill="none"><path d="M1.5 10.5 Q2 3 10.5 2" stroke="#1c1c1c" stroke-width="1.3"/></svg>
<svg style="left:1.8px;top:142.5px" width="11" height="11" viewBox="0 0 12 12" fill="none"><circle cx="6" cy="6" r="4.5" stroke="#2c3a72" stroke-width="1.3" fill="#b4c9ee"/><circle cx="5" cy="5" r="2" fill="#e4ecfa"/><path d="M6 6 l3 -3" stroke="#2c3a72" stroke-width="0.9"/><circle cx="6" cy="6" r="0.8" fill="#2c3a72"/></svg>
<svg style="left:1.8px;top:154.5px" width="11" height="11" viewBox="0 0 12 12" fill="none"><path d="M3 3.5 q0.5 -2 2.5 -1.2 q1.5 -1.3 2.8 0.2 q2 0 1.8 2 q1.3 1.5 -0.3 2.7 q0 1.8 -2 1.6 q-1.3 1.5 -2.8 0.2 q-2 0.3 -2.2 -1.6 q-1.5 -1.3 -0.3 -2.7 q-0.3 -1 0.5 -1.2 z" stroke="#2c3a72" stroke-width="1.1" fill="#e8eefa"/></svg>
<svg style="left:1.8px;top:166.9px" width="11" height="11" viewBox="0 0 12 12" fill="none"><path d="M1.5 9 q2 -7 4.5 -3 q2.5 4 4.5 -3" stroke="#2c3a72" stroke-width="1.2"/></svg>
<svg style="left:1.8px;top:181.3px" width="11" height="11" viewBox="0 0 12 12" fill="none"><ellipse cx="6" cy="6" rx="4.8" ry="3" stroke="#2c3a72" stroke-width="1.4" fill="#c4d5f2"/></svg>
<svg style="left:1.8px;top:193.8px" width="11" height="11" viewBox="0 0 12 12" fill="none"><path d="M9.5 8.5 q-5 2.5 -7 -1 q-1 -3 2.5 -4.5 q3 -1 5 1" stroke="#2c3a72" stroke-width="1.2"/><path d="M11 5.5 l-3 0.3 l1.8 -2.2 z" fill="#2c3a72"/></svg>
<svg style="left:1.8px;top:206.5px" width="11" height="11" viewBox="0 0 12 12" fill="none"><rect x="1.5" y="2" width="5.5" height="5" stroke="#2c3a72" stroke-width="0.9" fill="#dce6f8"/><circle cx="7.5" cy="7.5" r="2.6" stroke="#2c3a72" stroke-width="0.9" fill="#b8ccf0"/><path d="M8 9 l3 2 l-0.5 -2.5" fill="#3a7a3a"/><path d="M1 1 h3" stroke="#3a7a3a" stroke-width="1"/></svg>
<svg style="left:1.8px;top:218.5px" width="11" height="11" viewBox="0 0 12 12" fill="none"><rect x="1.5" y="2" width="5.5" height="5" stroke="#2c3a72" stroke-width="0.9" fill="#dce6f8"/><circle cx="7.8" cy="7.8" r="2.5" stroke="#2c3a72" stroke-width="0.9" fill="#b8ccf0"/><path d="M1 1 h3" stroke="#3a7a3a" stroke-width="1"/></svg>
<svg style="left:1.8px;top:230.5px" width="11" height="11" viewBox="0 0 12 12" fill="none"><rect x="5.2" y="5.2" width="1.7" height="1.7" fill="#1c1c1c"/></svg>
<svg style="left:1.8px;top:243.3px" width="11" height="11" viewBox="0 0 12 12" fill="none"><rect x="1.5" y="1.5" width="9" height="9" stroke="#2c3a72" stroke-width="1" fill="#c8d8f4"/><path d="M1.5 6 L6 1.5 M1.5 10.5 L10.5 1.5 M6 10.5 L10.5 6 M4 1.5 v9 M8 1.5 v9 M1.5 4 h9 M1.5 8 h9" stroke="#2c3a72" stroke-width="0.6"/></svg>
<svg style="left:1.8px;top:256.5px" width="11" height="11" viewBox="0 0 12 12" fill="none"><rect x="1" y="2" width="9.5" height="8" stroke="#2c3a72" stroke-width="1" fill="#6d96d8"/><ellipse cx="6.5" cy="6.5" rx="3" ry="2.3" fill="#e8eefa" stroke="#2c3a72" stroke-width="0.7"/></svg>
<svg style="left:1.8px;top:269.1px" width="11" height="11" viewBox="0 0 12 12" fill="none"><path d="M1.5 11 L5.4 1 h1.2 L10.5 11 M3.2 7.5 h5.6" stroke="#1c1c1c" stroke-width="1.3"/></svg>
<svg style="left:17.3px;top:65.7px" width="11" height="11" viewBox="0 0 12 12" fill="none"><path d="M1.5 1 v10 M10.5 1 v10 M1.5 2.5 h9" stroke="#1c1c1c" stroke-width="1.1"/><path d="M1.5 2.5 l2 -1 v2 z M10.5 2.5 l-2 -1 v2 z" fill="#1c1c1c"/></svg>
<svg style="left:17.3px;top:78.9px" width="11" height="11" viewBox="0 0 12 12" fill="none"><path d="M2 3 l8 6" stroke="#1c1c1c" stroke-width="1.1"/><path d="M0.8 4.5 l2.4 -3 M8.8 10.5 l2.4 -3" stroke="#1c1c1c" stroke-width="1.3"/></svg>
<svg style="left:17.3px;top:91.5px" width="11" height="11" viewBox="0 0 12 12" fill="none"><path d="M3.5 1 v10 M8.5 1 v10 M1 4 h10 M1 8 h10" stroke="#1c1c1c" stroke-width="0.9"/><path d="M1 1 l2 2 M9 9 l2 2" stroke="#4a6ab8" stroke-width="0.8"/></svg>
<svg style="left:17.3px;top:107.8px" width="11" height="11" viewBox="0 0 12 12" fill="none"><circle cx="6" cy="6" r="4.6" stroke="#1c1c1c" stroke-width="1" fill="#eef2fa"/><path d="M6 6 l3 -3.4" stroke="#1c1c1c" stroke-width="1"/><path d="M3.2 4 l2.8 2" stroke="#777" stroke-width="0.7"/></svg>
<svg style="left:17.3px;top:121.0px" width="11" height="11" viewBox="0 0 12 12" fill="none"><circle cx="6" cy="6" r="4.6" stroke="#1c1c1c" stroke-width="1" fill="#eef2fa"/><path d="M2.7 2.7 l6.6 6.6" stroke="#1c1c1c" stroke-width="1.6"/></svg>
<svg style="left:17.3px;top:133.0px" width="11" height="11" viewBox="0 0 12 12" fill="none"><path d="M1 10.5 h10 L3.5 2" stroke="#1c1c1c" stroke-width="1.1"/><path d="M6 10.5 q0.5 -3 -1.5 -5" stroke="#1c1c1c" stroke-width="0.9"/><path d="M9 5 l2 1" stroke="#1c1c1c" stroke-width="0.9"/></svg>
<svg style="left:17.3px;top:148.5px" width="11" height="11" viewBox="0 0 12 12" fill="none"><path d="M1 10.5 h10 L2 1.5 z" stroke="#1c1c1c" stroke-width="0.9" fill="#8a9a2a"/><path d="M5 1 l3 4 l-2.5 0.5 l3 4" stroke="#e8d820" stroke-width="1.4"/></svg>
<svg style="left:17.3px;top:160.5px" width="11" height="11" viewBox="0 0 12 12" fill="none"><path d="M2 1 v10 M7 1 v10 M2 3 h5 M2 8.5 h9 M11 7 v3" stroke="#1c1c1c" stroke-width="1"/></svg>
<svg style="left:17.3px;top:174.1px" width="11" height="11" viewBox="0 0 12 12" fill="none"><path d="M1.5 2 v9 M6 2 v9 M10.5 2 v9 M1.5 5 h9" stroke="#1c1c1c" stroke-width="1"/></svg>
<svg style="left:17.3px;top:190.9px" width="11" height="11" viewBox="0 0 12 12" fill="none"><path d="M1 5 l4 -3 M5 2 l1 3 l2 -1.5 l2.5 3.5" stroke="#e0c820" stroke-width="1.6"/><path d="M2 5 l5.5 5.5 M7.5 10.5 h3.5" stroke="#1c1c1c" stroke-width="1.1"/><path d="M1 4 l2.5 0.5 l-1.5 1.8 z" fill="#1c1c1c"/></svg>
<svg style="left:17.3px;top:203.0px" width="11" height="11" viewBox="0 0 12 12" fill="none"><rect x="1" y="2.5" width="10" height="7" fill="#dfe8fa" stroke="#3a5ab0" stroke-width="0.9"/><path d="M4.5 2.5 v7 M8 2.5 v7" stroke="#3a5ab0" stroke-width="0.8"/><circle cx="2.8" cy="6" r="1.1" stroke="#3a5ab0" stroke-width="0.7"/><path d="M5.5 6 h1.6 M9 5 v2" stroke="#3a5ab0" stroke-width="0.8"/></svg>
<svg style="left:17.3px;top:216.2px" width="11" height="11" viewBox="0 0 12 12" fill="none"><circle cx="6" cy="6" r="4.6" stroke="#1c1c1c" stroke-width="1" fill="#f6f8fc"/><path d="M4.8 6 h2.4 M6 4.8 v2.4" stroke="#1c1c1c" stroke-width="1"/></svg>
<svg style="left:17.3px;top:231.8px" width="11" height="11" viewBox="0 0 12 12" fill="none"><path d="M3 7 l3 -5.5 l3 5.5 M4.2 5 h3.6" stroke="#2c3a72" stroke-width="1.2"/><path d="M1 8 v3.5 M11 8 v3.5 M1 9.8 h10" stroke="#1c1c1c" stroke-width="1"/><path d="M1 9.8 l1.8 -0.9 v1.8 z M11 9.8 l-1.8 -0.9 v1.8 z" fill="#1c1c1c"/></svg>
<svg style="left:17.3px;top:245.0px" width="11" height="11" viewBox="0 0 12 12" fill="none"><path d="M1 8 v3.5 M11 8 v3.5 M1 9.8 h10" stroke="#1c1c1c" stroke-width="1"/><path d="M4 7.5 l5.5 -6.5" stroke="#d8b020" stroke-width="1.8"/><path d="M3.2 8.6 l1.2 -1.5" stroke="#1c1c1c" stroke-width="1.2"/><path d="M2 5 l2 -3" stroke="#1c1c1c" stroke-width="0.9"/></svg>
<svg style="left:17.3px;top:257.8px" width="11" height="11" viewBox="0 0 12 12" fill="none"><path d="M1.5 1 v10 M10.5 1 v10 M1.5 3 h9 M1.5 9 h9" stroke="#1c1c1c" stroke-width="1.1"/><rect x="3.5" y="4.5" width="5" height="3" fill="#4a78c8"/></svg>
<svg style="left:17.3px;top:273.9px" width="11" height="11" viewBox="0 0 12 12" fill="none"><path d="M1 10 h10 M1 10 l3.5 -2.5 l1 1 l4.5 -6.5" stroke="#1c1c1c" stroke-width="1.1"/><path d="M6 7.5 l4.5 -5.5" stroke="#a88018" stroke-width="1.8"/><path d="M1 8 v3 M4 9 v2" stroke="#1c1c1c" stroke-width="0.8"/></svg>
<div class="sepH" style="left:17px;top:105.0px;width:12px"></div>
<div class="sepH" style="left:17px;top:146.3px;width:12px"></div>
<div class="sepH" style="left:17px;top:188.0px;width:12px"></div>
<div class="sepH" style="left:17px;top:229.5px;width:12px"></div>
<div class="sepH" style="left:1px;top:282.5px;width:13px;background:#d0cdbd"></div>
<div class="sepH" style="left:16px;top:287.5px;width:14px;background:#d0cdbd"></div>
<div class="gripH" style="left:652px;top:61px;width:11px"></div>
<svg style="left:652.3px;top:65.7px" width="11" height="11" viewBox="0 0 12 12" fill="none"><path d="M2 10.5 l2.5 -3 l3 1.5 z" fill="#e8a8a8" stroke="#8a4a4a" stroke-width="0.5"/><path d="M4.5 7.5 l5 -6 l1.8 1.2 l-4 6.3 z" fill="#e8d070" stroke="#8a7020" stroke-width="0.6"/><path d="M1 11 h5" stroke="#999" stroke-width="0.7"/></svg>
<svg style="left:652.3px;top:77.7px" width="11" height="11" viewBox="0 0 12 12" fill="none"><circle cx="4" cy="3.5" r="2.3" stroke="#2c3a72" stroke-width="1.1"/><circle cx="7.5" cy="6" r="2.3" stroke="#2c3a72" stroke-width="1.1"/><circle cx="5" cy="9" r="1.8" stroke="#2c3a72" stroke-width="1"/></svg>
<svg style="left:652.3px;top:91.0px" width="11" height="11" viewBox="0 0 12 12" fill="none"><path d="M6 1 v10" stroke="#888" stroke-width="0.6" stroke-dasharray="1.5 1"/><path d="M5 2.5 L1 10 h4 z" stroke="#2c3a72" stroke-width="1" fill="#9db8e8"/><path d="M7 2.5 L11 10 h-4 z" stroke="#2c3a72" stroke-width="1" fill="#dfe8fa"/></svg>
<svg style="left:652.3px;top:103.7px" width="11" height="11" viewBox="0 0 12 12" fill="none"><path d="M1 10.5 h10 v-2 q-1 -0.5 -2 -3 q-1 -3.5 -3 -3.5 q-2 0 -3 3.5 q-1 2.5 -2 3 z" stroke="#2c3a72" stroke-width="1" fill="#dfe8fa"/><path d="M3.5 8.5 q1 -1 1.5 -3 q0.5 -1.5 1 -1.5 q0.5 0 1 1.5 q0.5 2 1.5 3" stroke="#2c3a72" stroke-width="0.8"/></svg>
<svg style="left:652.3px;top:116.2px" width="11" height="11" viewBox="0 0 12 12" fill="none"><rect x="1.3" y="1.3" width="3.8" height="3.8" stroke="#1c1c1c" stroke-width="1"/><rect x="6.9" y="1.3" width="3.8" height="3.8" stroke="#1c1c1c" stroke-width="1"/><rect x="1.3" y="6.9" width="3.8" height="3.8" stroke="#1c1c1c" stroke-width="1"/><rect x="6.9" y="6.9" width="3.8" height="3.8" stroke="#1c1c1c" stroke-width="1"/></svg>
<svg style="left:652.3px;top:129.5px" width="11" height="11" viewBox="0 0 12 12" fill="none"><path d="M6 1.5 v9 M1.5 6 h9" stroke="#2b4aa8" stroke-width="1.3"/><path d="M6 0.5 l-2 2.3 h4 z M6 11.5 l-2 -2.3 h4 z M0.5 6 l2.3 -2 v4 z M11.5 6 l-2.3 -2 v4 z" fill="#2b4aa8"/></svg>
<svg style="left:652.3px;top:142.5px" width="11" height="11" viewBox="0 0 12 12" fill="none"><path d="M8.5 2.5 a4.2 4.2 0 1 1 -5 0" stroke="#2c3a72" stroke-width="1.4"/><path d="M5.5 0.5 l3.5 2 l-3.5 2 z" fill="#2c3a72"/></svg>
<svg style="left:652.3px;top:155.1px" width="11" height="11" viewBox="0 0 12 12" fill="none"><rect x="1.5" y="1.5" width="9" height="9" stroke="#4a78c8" stroke-width="1" fill="#eef3fc"/><rect x="1.5" y="5.5" width="5" height="5" stroke="#4a78c8" stroke-width="0.9" fill="#c8d8f4"/></svg>
<svg style="left:652.3px;top:167.3px" width="11" height="11" viewBox="0 0 12 12" fill="none"><path d="M2 10.5 V1.5 h3 l5.5 9 z" stroke="#1c1c1c" stroke-width="1.1" fill="#eef3fc"/><path d="M5 1.5 v9" stroke="#6a8ac8" stroke-width="0.7"/></svg>
<svg style="left:652.3px;top:180.9px" width="11" height="11" viewBox="0 0 12 12" fill="none"><path d="M1 7 h10" stroke="#4a78c8" stroke-width="1"/><path d="M7.5 1 l-3 10" stroke="#4a78c8" stroke-width="1"/><path d="M5.8 6.5 l1 -3" stroke="#1c1c1c" stroke-width="1.2"/></svg>
<svg style="left:652.3px;top:193.0px" width="11" height="11" viewBox="0 0 12 12" fill="none"><path d="M1 6 h4" stroke="#4a78c8" stroke-width="1"/><path d="M8.5 1 l-2.5 10" stroke="#4a78c8" stroke-width="1.1"/><path d="M5 6 h2.2" stroke="#6a98e0" stroke-width="0.9" stroke-dasharray="1 0.7"/></svg>
<svg style="left:652.3px;top:206.2px" width="11" height="11" viewBox="0 0 12 12" fill="none"><rect x="1.5" y="2.5" width="9" height="7.5" stroke="#2c3a72" stroke-width="1.1" fill="#f2f5fc"/></svg>
<svg style="left:652.3px;top:218.2px" width="11" height="11" viewBox="0 0 12 12" fill="none"><path d="M4.5 2.5 h-3 v7.5 h9 v-7.5 h-3" stroke="#2c3a72" stroke-width="1.1"/></svg>
<svg style="left:652.3px;top:231.5px" width="11" height="11" viewBox="0 0 12 12" fill="none"><path d="M2 11 v-6 l4 -3.5 h5" stroke="#1c1c1c" stroke-width="1.1"/><path d="M2 2 l3 2" stroke="#8a9ac8" stroke-width="0.7"/></svg>
<svg style="left:652.3px;top:243.9px" width="11" height="11" viewBox="0 0 12 12" fill="none"><path d="M2 11 v-4 q0 -5 5 -5 h4" stroke="#1c1c1c" stroke-width="1.2"/><circle cx="3" cy="3" r="1" fill="#7aa0e0"/></svg>
<svg style="left:652.3px;top:256.5px" width="11" height="11" viewBox="0 0 12 12" fill="none"><path d="M1 11 l4 -4 M7 5 l4 -4" stroke="#1c1c1c" stroke-width="1"/><path d="M3 3 l6 6 M9 3 l-6 6 M6 2 v8 M2 6 h8" stroke="#d83a1a" stroke-width="1"/><circle cx="6" cy="6" r="1.6" fill="#e8702a"/></svg>
<div class="sepH" style="left:651px;top:270.5px;width:13px;background:#d0cdbd"></div>
<div class="gripH" style="left:652px;top:274.5px;width:11px"></div>
<svg style="left:652.3px;top:279.3px" width="11" height="11" viewBox="0 0 12 12" fill="none"><rect x="1.5" y="1.5" width="9" height="8" stroke="#1c1c1c" stroke-width="1" fill="#f4f7fd"/><path d="M3 10.5 l3 -6 l3 6 z" stroke="#1c1c1c" stroke-width="1" fill="#fff"/></svg>
<svg style="left:652.3px;top:292.2px" width="11" height="11" viewBox="0 0 12 12" fill="none"><rect x="1.5" y="1.5" width="5" height="5" stroke="#1c1c1c" stroke-width="1" fill="#f4f7fd"/><circle cx="7.5" cy="7.5" r="2.6" stroke="#1c1c1c" stroke-width="1" fill="#f4f7fd"/><path d="M3 8 h3" stroke="#1c1c1c" stroke-width="0.8"/></svg>
<svg style="left:652.3px;top:305.8px" width="11" height="11" viewBox="0 0 12 12" fill="none"><path d="M6 1 l4.5 2.5 v5 l-4.5 2.5 l-4.5 -2.5 v-5 z M6 6 v5 M1.5 3.5 l4.5 2.5 l4.5 -2.5" stroke="#1c1c1c" stroke-width="0.9" fill="#fafbfe"/></svg>
<svg style="left:652.3px;top:317.8px" width="11" height="11" viewBox="0 0 12 12" fill="none"><path d="M1 4 l5 -2 l5 2 v4.5 l-5 2 l-5 -2 z" fill="#3f74d0"/><path d="M1 4 l5 -2 l5 2 l-5 2 z" fill="#7aa8ee"/><path d="M6 6 v4.5 l5 -2 v-4.5 z" fill="#2a55a8"/></svg>
<svg style="left:652.3px;top:329.7px" width="11" height="11" viewBox="0 0 12 12" fill="none"><circle cx="6" cy="6" r="4.8" fill="#2f62c0"/><circle cx="4.6" cy="4.4" r="2.2" fill="#7aa8ee"/><path d="M2 8 q4 3 8 -1" stroke="#1a3a80" stroke-width="1"/></svg>
<svg style="left:652.3px;top:343.3px" width="11" height="11" viewBox="0 0 12 12" fill="none"><path d="M6 1 l4.5 2.5 v5 l-4.5 2.5 l-4.5 -2.5 v-5 z" fill="#3f74d0" stroke="#1a3a80" stroke-width="0.8"/><path d="M3.5 4.5 l2.5 -1.4 l2.5 1.4 v3 l-2.5 1.4 l-2.5 -1.4 z" fill="#a8c4f4" stroke="#1a3a80" stroke-width="0.5"/></svg>
<svg style="left:652.3px;top:355.2px" width="11" height="11" viewBox="0 0 12 12" fill="none"><circle cx="6" cy="6" r="4.8" fill="#2f62c0" stroke="#1a3a80" stroke-width="0.6"/><path d="M2 5 q4 -3 8 0 q-3 3 -8 0" fill="#8ab4f0"/><path d="M3 9 q3 1.5 6 0" stroke="#a8c4f4" stroke-width="0.9"/></svg>
<div class="sepH" style="left:651px;top:368.5px;width:13px;background:#d0cdbd"></div>
<div class="sep" style="left:650.5px;top:60px;height:309px;background:#dedbcb"></div>
<div class="abs" style="left:639px;top:59px;width:11px;height:346px;background:#f6f5ef"></div>
<div class="sbtn" style="left:639.8px;top:60.3px;width:9.0px;height:9.0px"></div><svg style="left:639.8px;top:60.3px" width="9.0" height="9.0" viewBox="0 0 10 10" fill="none"><path d="M2.6 6.3 L5 3.8 L7.4 6.3" stroke="#3a4f94" stroke-width="1.7" transform="rotate(0 5 5)"/></svg>
<div class="sbtn" style="left:639.8px;top:395.3px;width:9.0px;height:9.0px"></div><svg style="left:639.8px;top:395.3px" width="9.0" height="9.0" viewBox="0 0 10 10" fill="none"><path d="M2.6 6.3 L5 3.8 L7.4 6.3" stroke="#3a4f94" stroke-width="1.7" transform="rotate(180 5 5)"/></svg>
<div class="sbtn" style="left:640px;top:176.5px;width:9.5px;height:10px"></div>
<svg style="left:642px;top:178.5px" width="6" height="6" viewBox="0 0 6 6"><path d="M0.5 1 h5 M0.5 2.5 h5 M0.5 4 h5 M0.5 5.5 h5" stroke="#e8eefc" stroke-width="0.6"/></svg>
<div id="tabsrow" class="abs"></div>
<div class="abs" style="left:31.5px;top:405.5px;width:11px;height:8.5px;border:1px solid;border-color:#fff #8a887c #8a887c #fff"></div>
<svg style="left:31.5px;top:405.5px" width="11" height="8.5" viewBox="0 0 11 10"><path d="M3 2 v6 M8 2 L4 5 L8 8 z" fill="#111" stroke="#111" stroke-width="1"/></svg>
<div class="abs" style="left:42.9px;top:405.5px;width:11px;height:8.5px;border:1px solid;border-color:#fff #8a887c #8a887c #fff"></div>
<svg style="left:42.9px;top:405.5px" width="11" height="8.5" viewBox="0 0 11 10"><path d="M7.5 2 L3.5 5 L7.5 8 z" fill="#111"/></svg>
<div class="abs" style="left:54.3px;top:405.5px;width:11px;height:8.5px;border:1px solid;border-color:#fff #8a887c #8a887c #fff"></div>
<svg style="left:54.3px;top:405.5px" width="11" height="8.5" viewBox="0 0 11 10"><path d="M3.5 2 L7.5 5 L3.5 8 z" fill="#111"/></svg>
<div class="abs" style="left:65.7px;top:405.5px;width:11px;height:8.5px;border:1px solid;border-color:#fff #8a887c #8a887c #fff"></div>
<svg style="left:65.7px;top:405.5px" width="11" height="8.5" viewBox="0 0 11 10"><path d="M8 2 v6 M3 2 L7 5 L3 8 z" fill="#111" stroke="#111" stroke-width="1"/></svg>
<svg style="left:76px;top:404.6px" width="80" height="10" viewBox="0 0 80 10"><path d="M48.8 0 H75.2 L72 8.6 H50 Z" fill="#f2f0e6" stroke="#333" stroke-width="0.8"/><path d="M22.5 0 H48.8 L45.7 8.6 H23.6 Z" fill="#f2f0e6" stroke="#333" stroke-width="0.8"/><path d="M0.6 0 H22.7 L20.6 9.2 H2.3 Z" fill="#000"/></svg>
<div class="abs" style="left:79.3px;top:404.3px;font-size:8.2px;line-height:9px;color:#fff;font-weight:bold;white-space:nowrap"><i style="display:inline-block;font-style:normal;text-align:center;vertical-align:top;width:8.3px">模</i><i style="display:inline-block;font-style:normal;text-align:center;vertical-align:top;width:8.3px">型</i></div>
<div class="abs" style="left:101.5px;top:404.2px;font-size:7.8px;line-height:9px;color:#111;white-space:nowrap"><i style="display:inline-block;font-style:normal;text-align:center;vertical-align:top;width:7.9px">布</i><i style="display:inline-block;font-style:normal;text-align:center;vertical-align:top;width:7.9px">局</i>1</div>
<div class="abs" style="left:127.8px;top:404.2px;font-size:7.8px;line-height:9px;color:#111;white-space:nowrap"><i style="display:inline-block;font-style:normal;text-align:center;vertical-align:top;width:7.9px">布</i><i style="display:inline-block;font-style:normal;text-align:center;vertical-align:top;width:7.9px">局</i>2</div>
<div class="abs" style="left:435px;top:404.5px;width:204px;height:9.5px;background:#f6f5ef"></div>
<div class="sbtn" style="left:435.5px;top:405.5px;width:9.2px;height:8.2px"></div><svg style="left:435.5px;top:405.5px" width="9.2" height="8.2" viewBox="0 0 10 10" fill="none"><path d="M2.6 6.3 L5 3.8 L7.4 6.3" stroke="#3a4f94" stroke-width="1.7" transform="rotate(270 5 5)"/></svg>
<div class="sbtn" style="left:629.3px;top:405.5px;width:9.2px;height:8.2px"></div><svg style="left:629.3px;top:405.5px" width="9.2" height="8.2" viewBox="0 0 10 10" fill="none"><path d="M2.6 6.3 L5 3.8 L7.4 6.3" stroke="#3a4f94" stroke-width="1.7" transform="rotate(90 5 5)"/></svg>
<div class="sbtn" style="left:529px;top:405.5px;width:10px;height:8.2px"></div>
<svg style="left:531px;top:406.3px" width="6" height="6" viewBox="0 0 6 6"><path d="M1 0.5 v5 M2.5 0.5 v5 M4 0.5 v5 M5.5 0.5 v5" stroke="#e8eefc" stroke-width="0.6"/></svg>
<div class="abs" style="left:0;top:414px;width:665px;height:1px;background:#fff"></div>
<div class="abs" style="left:0;top:431.5px;width:665px;height:1px;background:#c9c6b6"></div><div class="abs" style="left:0;top:432.5px;width:665px;height:1px;background:#8f8d80"></div><div class="abs" style="left:0;top:433.5px;width:665px;height:1.5px;background:#f8f7f0"></div>
<div class="band" style="left:0.0px;top:415px;width:254.0px;height:16.5px"></div>
<div class="band" style="left:255.0px;top:415px;width:180.0px;height:16.5px"></div>
<div class="band" style="left:435.5px;top:415px;width:229.5px;height:16.5px"></div>
<div class="grip" style="left:3.0px;top:418px;height:12px"></div>
<div class="grip" style="left:256.5px;top:418px;height:12px"></div>
<div class="grip" style="left:437.0px;top:418px;height:12px"></div>
<div class="sep" style="left:34.5px;top:418px;height:12px"></div>
<div class="sep" style="left:105.0px;top:418px;height:12px"></div>
<div class="sep" style="left:147.5px;top:418px;height:12px"></div>
<div class="sep" style="left:189.5px;top:418px;height:12px"></div>
<div class="sep" style="left:204.0px;top:418px;height:12px"></div>
<div class="sep" style="left:250.5px;top:418px;height:12px"></div>
<div class="sep" style="left:275.0px;top:418px;height:12px"></div>
<div class="sep" style="left:358.5px;top:418px;height:12px"></div>
<div class="sep" style="left:414.0px;top:418px;height:12px"></div>
<div class="sep" style="left:431.0px;top:418px;height:12px"></div>
<div class="sep" style="left:481.5px;top:418px;height:12px"></div>
<div class="sep" style="left:590.5px;top:418px;height:12px"></div>
<div class="sep" style="left:621.5px;top:418px;height:12px"></div>
<svg style="left:7.8px;top:418.8px" width="11" height="11" viewBox="0 0 12 12" fill="none"><path d="M2 6 h6" stroke="#343c5c" stroke-width="1.3"/><circle cx="1.8" cy="6" r="1.3" fill="#343c5c"/><circle cx="9.5" cy="6" r="1.6" stroke="#4a74c0" stroke-width="0.9" fill="#eaf0fb"/></svg>
<svg style="left:20.5px;top:418.8px" width="11" height="11" viewBox="0 0 12 12" fill="none"><path d="M3 10 v-6 h6" stroke="#343c5c" stroke-width="1.2"/><circle cx="3" cy="10" r="1.2" stroke="#4a74c0" stroke-width="0.8" fill="#eaf0fb"/><circle cx="9.8" cy="3.2" r="1.5" stroke="#6a98e0" stroke-width="0.9" fill="#eaf0fb"/></svg>
<svg style="left:37.2px;top:418.8px" width="11" height="11" viewBox="0 0 12 12" fill="none"><path d="M2.5 9.5 L9 3" stroke="#343c5c" stroke-width="1.2"/><circle cx="9.5" cy="2.5" r="1.6" stroke="#4a74c0" stroke-width="0.9" fill="#eaf0fb"/><rect x="1" y="8.8" width="2.4" height="2.4" stroke="#4a74c0" stroke-width="0.7" fill="#eaf0fb"/></svg>
<svg style="left:50.5px;top:418.8px" width="11" height="11" viewBox="0 0 12 12" fill="none"><path d="M2 10 L10 2" stroke="#343c5c" stroke-width="1.2"/><path d="M4.8 5.8 l2.6 0.3 l-1.3 2.2 z" stroke="#4a74c0" stroke-width="0.7" fill="#eaf0fb"/></svg>
<svg style="left:63.8px;top:418.8px" width="11" height="11" viewBox="0 0 12 12" fill="none"><path d="M2 2 L10 10 M10 2 L2 10" stroke="#30364c" stroke-width="1.3"/></svg>
<svg style="left:77.2px;top:418.8px" width="11" height="11" viewBox="0 0 12 12" fill="none"><path d="M2 2 L10 10 M10 2 L2 10" stroke="#30364c" stroke-width="1.2"/><rect x="4.5" y="4.5" width="3" height="3" stroke="#4a8ae0" stroke-width="0.8"/></svg>
<svg style="left:91.2px;top:418.8px" width="11" height="11" viewBox="0 0 12 12" fill="none"><path d="M1.5 6 h9" stroke="#3a3a4a" stroke-width="1.3" stroke-dasharray="5 1.2"/></svg>
<svg style="left:107.8px;top:418.8px" width="11" height="11" viewBox="0 0 12 12" fill="none"><circle cx="6" cy="6" r="4.3" stroke="#3a64b8" stroke-width="1.3" fill="#dfe8fa"/><circle cx="6" cy="6" r="1.2" fill="#343c5c"/></svg>
<svg style="left:120.5px;top:418.8px" width="11" height="11" viewBox="0 0 12 12" fill="none"><circle cx="6" cy="6" r="4.2" stroke="#3a64b8" stroke-width="1" fill="#f4f7fd"/><path d="M6 0.8 l1.8 1.8 l-1.8 1.8 l-1.8 -1.8 z M6 7.6 l1.8 1.8 l-1.8 1.8 l-1.8 -1.8 z M0.8 6 l1.8 -1.8 l1.8 1.8 l-1.8 1.8 z M7.6 6 l1.8 -1.8 l1.8 1.8 l-1.8 1.8 z" fill="#4a80e0"/></svg>
<svg style="left:134.5px;top:418.8px" width="11" height="11" viewBox="0 0 12 12" fill="none"><circle cx="6" cy="6.3" r="4" stroke="#3a64b8" stroke-width="1.1" fill="#f4f7fd"/><path d="M1.5 2.2 h9" stroke="#3a64b8" stroke-width="0.9"/><circle cx="6" cy="2.3" r="1.1" fill="#6a98e0"/></svg>
<svg style="left:149.5px;top:418.8px" width="11" height="11" viewBox="0 0 12 12" fill="none"><path d="M6 1.5 v8 M1.5 9.5 h9" stroke="#30364c" stroke-width="1.2"/><path d="M6 7.5 h1.8 v2" stroke="#4a74c0" stroke-width="0.7"/></svg>
<svg style="left:164.5px;top:418.8px" width="11" height="11" viewBox="0 0 12 12" fill="none"><path d="M1.5 9.5 L7.5 2 M4.5 10 L10.5 2.5" stroke="#1c2240" stroke-width="1.4"/></svg>
<svg style="left:177.2px;top:418.8px" width="11" height="11" viewBox="0 0 12 12" fill="none"><rect x="1.5" y="2.5" width="5" height="4" stroke="#3a7a4a" stroke-width="0.9" fill="#dff0e4"/><circle cx="7.8" cy="8" r="2.4" stroke="#3a64b8" stroke-width="0.9" fill="#dfe8fa"/></svg>
<svg style="left:191.2px;top:418.8px" width="11" height="11" viewBox="0 0 12 12" fill="none"><circle cx="6" cy="6" r="1.5" fill="#b0ad9c"/></svg>
<svg style="left:207.8px;top:418.8px" width="11" height="11" viewBox="0 0 12 12" fill="none"><path d="M1.5 10.5 L8 4" stroke="#1c2240" stroke-width="1.2"/><path d="M6 2 l4 4 M10 2 l-4 4" stroke="#1c2240" stroke-width="1"/><circle cx="9.5" cy="8.5" r="1.2" stroke="#6a88c8" stroke-width="0.6"/></svg>
<svg style="left:221.8px;top:418.8px" width="11" height="11" viewBox="0 0 12 12" fill="none"><path d="M1.5 10 L8.5 2.5" stroke="#b8382a" stroke-width="1.3"/><path d="M2.5 3.5 q3 -2 5 1 q1 3 -2.5 5" stroke="#c85a4a" stroke-width="0.9"/><circle cx="9.3" cy="9.3" r="1.4" stroke="#3a5a4a" stroke-width="0.8" fill="#eef"/></svg>
<svg style="left:237.2px;top:418.8px" width="11" height="11" viewBox="0 0 12 12" fill="none"><path d="M2.8 10 v-5 q0 -3 3.2 -3 q3.2 0 3.2 3 v5" stroke="#c0282a" stroke-width="1.8"/><path d="M1.8 9.5 h2 M8.2 9.5 h2" stroke="#444" stroke-width="1.4"/><circle cx="10.3" cy="10.3" r="1.1" stroke="#3a5a4a" stroke-width="0.6" fill="#eef"/></svg>
<svg style="left:261.2px;top:418.8px" width="11" height="11" viewBox="0 0 12 12" fill="none"><rect x="1" y="1.5" width="8" height="7" fill="#3f74d0" stroke="#1a3a80" stroke-width="0.8"/><rect x="3.5" y="4" width="7.5" height="6.5" fill="#e8f0fc" stroke="#1a3a80" stroke-width="0.8"/><path d="M5 6 h4.5 v3 h-4.5 z" fill="#6a98e0"/></svg>
<svg style="left:277.8px;top:418.8px" width="11" height="11" viewBox="0 0 12 12" fill="none"><path d="M1.5 4 l3 -2.5 h6 v6 l-3 2.5 h-6 z" fill="#cfe0f8" stroke="#4a74c0" stroke-width="0.8"/><path d="M1.5 4 h6 v6 M7.5 4 l3 -2.5" stroke="#4a74c0" stroke-width="0.7"/><path d="M1.5 4 l3 -2.5 h6 l-3 2.5 z" fill="#2f5fc0"/></svg>
<svg style="left:291.2px;top:418.8px" width="11" height="11" viewBox="0 0 12 12" fill="none"><path d="M1.5 4 l3 -2.5 h6 v6 l-3 2.5 h-6 z" fill="#cfe0f8" stroke="#4a74c0" stroke-width="0.8"/><path d="M1.5 4 h6 v6 M7.5 4 l3 -2.5" stroke="#4a74c0" stroke-width="0.7"/><path d="M1.5 10 l3 -2.5 h6 l-3 2.5 z" fill="#2f5fc0"/></svg>
<svg style="left:304.5px;top:418.8px" width="11" height="11" viewBox="0 0 12 12" fill="none"><path d="M1.5 4 l3 -2.5 h6 v6 l-3 2.5 h-6 z" fill="#cfe0f8" stroke="#4a74c0" stroke-width="0.8"/><path d="M1.5 4 h6 v6 M7.5 4 l3 -2.5" stroke="#4a74c0" stroke-width="0.7"/><path d="M1.5 4 l2 -1.6 v6 l-2 1.6 z" fill="#2f5fc0"/><path d="M1.5 4 h6 v6 h-6 z" fill="#a8c4f0" fill-opacity="0.5"/></svg>
<svg style="left:318.5px;top:418.8px" width="11" height="11" viewBox="0 0 12 12" fill="none"><path d="M1.5 4 l3 -2.5 h6 v6 l-3 2.5 h-6 z" fill="#cfe0f8" stroke="#4a74c0" stroke-width="0.8"/><path d="M1.5 4 h6 v6 M7.5 4 l3 -2.5" stroke="#4a74c0" stroke-width="0.7"/><path d="M7.5 4 l3 -2.5 v6 l-3 2.5 z" fill="#2f5fc0"/></svg>
<svg style="left:331.2px;top:418.8px" width="11" height="11" viewBox="0 0 12 12" fill="none"><path d="M1.5 4 l3 -2.5 h6 v6 l-3 2.5 h-6 z" fill="#cfe0f8" stroke="#4a74c0" stroke-width="0.8"/><path d="M1.5 4 h6 v6 M7.5 4 l3 -2.5" stroke="#4a74c0" stroke-width="0.7"/><path d="M1.5 4 h6 v6 h-6 z" fill="#2f5fc0"/></svg>
<svg style="left:345.2px;top:418.8px" width="11" height="11" viewBox="0 0 12 12" fill="none"><path d="M1.5 4 l3 -2.5 h6 v6 l-3 2.5 h-6 z" fill="#cfe0f8" stroke="#4a74c0" stroke-width="0.8"/><path d="M1.5 4 h6 v6 M7.5 4 l3 -2.5" stroke="#4a74c0" stroke-width="0.7"/><path d="M4.5 1.5 h6 v6 h-6 z" fill="#2f5fc0"/></svg>
<svg style="left:361.2px;top:418.8px" width="11" height="11" viewBox="0 0 12 12" fill="none"><path d="M6 1 l4.5 2.5 v5 l-4.5 2.5 l-4.5 -2.5 v-5 z" fill="#dce8fa" stroke="#4a74c0" stroke-width="0.7"/><path d="M1.5 3.5 l4.5 2.5 v5 l-4.5 -2.5 z" fill="#2f5fc0"/></svg>
<svg style="left:374.5px;top:418.8px" width="11" height="11" viewBox="0 0 12 12" fill="none"><path d="M6 1 l4.5 2.5 v5 l-4.5 2.5 l-4.5 -2.5 v-5 z" fill="#dce8fa" stroke="#4a74c0" stroke-width="0.7"/><path d="M10.5 3.5 l-4.5 2.5 v5 l4.5 -2.5 z" fill="#2f5fc0"/></svg>
<svg style="left:387.8px;top:418.8px" width="11" height="11" viewBox="0 0 12 12" fill="none"><path d="M6 1 l4.5 2.5 v5 l-4.5 2.5 l-4.5 -2.5 v-5 z" fill="#dce8fa" stroke="#4a74c0" stroke-width="0.7"/><path d="M10.5 3.5 l-4.5 2.5 v5 l4.5 -2.5 z" fill="#5a88d8"/><path d="M6 1 l4.5 2.5 l-4.5 2.5 l-4.5 -2.5z" fill="#2f5fc0"/></svg>
<svg style="left:401.2px;top:418.8px" width="11" height="11" viewBox="0 0 12 12" fill="none"><path d="M6 1 l4.5 2.5 v5 l-4.5 2.5 l-4.5 -2.5 v-5 z" fill="#dce8fa" stroke="#4a74c0" stroke-width="0.7"/><path d="M1.5 3.5 l4.5 2.5 v5 l-4.5 -2.5 z" fill="#5a88d8"/><path d="M6 1 l4.5 2.5 l-4.5 2.5 l-4.5 -2.5z" fill="#2f5fc0"/></svg>
<svg style="left:416.0px;top:418.8px" width="11" height="11" viewBox="0 0 12 12" fill="none"><circle cx="3.5" cy="5" r="2.3" fill="#1a1a1a"/><circle cx="8" cy="4.5" r="2.6" fill="#1a1a1a"/><path d="M2 6 h8 v3.5 h-8 z" fill="#1a1a1a"/><path d="M1 9 l2 -2 M11 9 l-2 -2" stroke="#1a1a1a" stroke-width="1.2"/><circle cx="8" cy="4.5" r="0.9" fill="#8a8aa0"/></svg>
<svg style="left:441.5px;top:418.8px" width="11" height="11" viewBox="0 0 12 12" fill="none"><circle cx="4.3" cy="6" r="3.3" fill="#dce8fa" stroke="#3a64b8" stroke-width="0.9"/><circle cx="7.7" cy="6" r="3.3" fill="#dce8fa" stroke="#3a64b8" stroke-width="0.9"/><circle cx="4.3" cy="6" r="2.2" fill="#a8c4f0"/><circle cx="7.7" cy="6" r="2.2" fill="#a8c4f0"/></svg>
<svg style="left:454.5px;top:418.8px" width="11" height="11" viewBox="0 0 12 12" fill="none"><circle cx="4.3" cy="6" r="3.3" fill="#dce8fa" stroke="#3a64b8" stroke-width="0.9"/><circle cx="7.7" cy="6" r="3.3" fill="#f4f7fd" stroke="#3a64b8" stroke-width="0.9"/></svg>
<svg style="left:467.5px;top:418.8px" width="11" height="11" viewBox="0 0 12 12" fill="none"><circle cx="4.3" cy="6" r="3.3" fill="#dce8fa" stroke="#3a64b8" stroke-width="0.9"/><circle cx="7.7" cy="6" r="3.3" fill="#dce8fa" stroke="#3a64b8" stroke-width="0.9"/><path d="M6 3.3 q1.5 2.7 0 5.4 q-1.5 -2.7 0 -5.4 z" fill="#3a64b8"/></svg>
<svg style="left:483.9px;top:418.8px" width="11" height="11" viewBox="0 0 12 12" fill="none"><path d="M2 4.5 l2.5 -2.5 h6 v5.5 l-2.5 2.5 h-6 z" fill="#f4f7fd" stroke="#2a3a6a" stroke-width="0.8"/><path d="M2 4.5 h6 v5.5 M8 4.5 l2.5 -2.5" stroke="#2a3a6a" stroke-width="0.7"/><path d="M10 4 l1.5 -1 v5" stroke="#2a3a6a" stroke-width="0.7"/></svg>
<svg style="left:496.9px;top:418.8px" width="11" height="11" viewBox="0 0 12 12" fill="none"><path d="M2 10 l5 -5" stroke="#2a3a6a" stroke-width="1.1"/><circle cx="3" cy="9" r="1.6" stroke="#2a3a6a" stroke-width="0.8" fill="#dfe8fa"/><path d="M6 3 h4 v4 M8 1 v4 M6 5 h4" stroke="#2a3a6a" stroke-width="0.8"/></svg>
<svg style="left:509.3px;top:418.8px" width="11" height="11" viewBox="0 0 12 12" fill="none"><path d="M2 4.5 l2.5 -2.5 h6 v5.5 l-2.5 2.5 h-6 z" fill="#f4f7fd" stroke="#2a3a6a" stroke-width="0.8"/><path d="M2 4.5 h6 v5.5 M8 4.5 l2.5 -2.5" stroke="#2a3a6a" stroke-width="0.7"/><path d="M2 4.5 h6 v5.5 h-6 z" fill="#c8d8f4"/></svg>
<svg style="left:523.5px;top:418.8px" width="11" height="11" viewBox="0 0 12 12" fill="none"><path d="M2 4.5 l2.5 -2.5 h6 v5.5 l-2.5 2.5 h-6 z" fill="#f0c8d8" stroke="#2a3a6a" stroke-width="0.8"/><path d="M2 4.5 h6 v5.5 M8 4.5 l2.5 -2.5" stroke="#2a3a6a" stroke-width="0.7"/><path d="M2 4.5 h6 v5.5 h-6 z" fill="#e8a0b8"/><path d="M3.5 6 l3 2.5 M6.5 6 l-3 2.5" stroke="#9a2a5a" stroke-width="0.7"/></svg>
<svg style="left:536.9px;top:418.8px" width="11" height="11" viewBox="0 0 12 12" fill="none"><circle cx="6" cy="6.3" r="4.3" fill="#dfe8fa" stroke="#2a3a6a" stroke-width="0.9"/><path d="M2 5.5 q4 -3 8 0 M3.5 9 q2.5 -5 6 -4" stroke="#2a3a6a" stroke-width="0.8"/><path d="M4 2 l3 1 l-2.5 1.5 z" fill="#2a3a6a"/></svg>
<svg style="left:549.9px;top:418.8px" width="11" height="11" viewBox="0 0 12 12" fill="none"><path d="M2.5 9.5 q-1.5 -4 2.5 -6.5 l4.5 3 q-3 1.5 -2 5 z" fill="#f4f7fd" stroke="#2a3a6a" stroke-width="0.9"/><path d="M5 3 l2.5 -1.5 l3 2.5 l-1 2" stroke="#2a3a6a" stroke-width="0.8"/></svg>
<svg style="left:563.0px;top:418.8px" width="11" height="11" viewBox="0 0 12 12" fill="none"><path d="M2 4.5 l2.5 -2.5 h6 v5.5 l-2.5 2.5 h-6 z" fill="#5a88d8" stroke="#2a3a6a" stroke-width="0.8"/><path d="M2 4.5 h6 v5.5 M8 4.5 l2.5 -2.5" stroke="#2a3a6a" stroke-width="0.7"/><path d="M2 4.5 h6 v5.5 h-6 z" fill="#2f5fc0"/><path d="M4 2 l-2.5 -1 M9 1.5 l2 -1" stroke="#2a3a6a" stroke-width="0.7"/><path d="M3.5 6 h3 v2.5 h-3 z" fill="#dfe8fa"/></svg>
<svg style="left:576.5px;top:418.8px" width="11" height="11" viewBox="0 0 12 12" fill="none"><path d="M2 4.5 l2.5 -2.5 h6 v5.5 l-2.5 2.5 h-6 z" fill="#4a9a8a" stroke="#2a3a6a" stroke-width="0.8"/><path d="M2 4.5 h6 v5.5 M8 4.5 l2.5 -2.5" stroke="#2a3a6a" stroke-width="0.7"/><path d="M2 4.5 h6 v5.5 h-6 z" fill="#2a7a6a"/><path d="M3.5 6 h3 v2.5 h-3 z" fill="#3f74d0"/><path d="M1 3 l2 1" stroke="#2a3a6a" stroke-width="0.7"/></svg>
<svg style="left:593.5px;top:418.8px" width="11" height="11" viewBox="0 0 12 12" fill="none"><path d="M2 4.5 l2.5 -2.5 h6 v5.5 l-2.5 2.5 h-6 z" fill="#dfe8fa" stroke="#2a3a6a" stroke-width="0.8"/><path d="M2 4.5 h6 v5.5 M8 4.5 l2.5 -2.5" stroke="#2a3a6a" stroke-width="0.7"/><path d="M2 4.5 h6 v5.5 h-6 z" fill="#a8c4f0"/><path d="M4 1 v2 M2 2.5 h1.5" stroke="#2a3a6a" stroke-width="0.8"/></svg>
<svg style="left:607.5px;top:418.8px" width="11" height="11" viewBox="0 0 12 12" fill="none"><path d="M2 4.5 l2.5 -2.5 h6 v5.5 l-2.5 2.5 h-6 z" fill="#f0b8b8" stroke="#2a3a6a" stroke-width="0.8"/><path d="M2 4.5 h6 v5.5 M8 4.5 l2.5 -2.5" stroke="#2a3a6a" stroke-width="0.7"/><path d="M2 4.5 h6 v5.5 h-6 z" fill="#d85a5a"/><path d="M3.2 5.8 h3.6 v3 h-3.6 z" fill="#f4f7fd"/></svg>
<svg style="left:624.2px;top:418.8px" width="11" height="11" viewBox="0 0 12 12" fill="none"><path d="M2 4.5 l2.5 -2.5 h6 v5.5 l-2.5 2.5 h-6 z" fill="#3f74d0" stroke="#2a3a6a" stroke-width="0.8"/><path d="M2 4.5 h6 v5.5 M8 4.5 l2.5 -2.5" stroke="#2a3a6a" stroke-width="0.7"/><path d="M2 4.5 h6 v5.5 h-6 z" fill="#2a55a8"/><path d="M3.5 6 h3 v2.5 h-3 z" fill="#8ab4f0"/></svg>
<svg style="left:637.5px;top:418.8px" width="11" height="11" viewBox="0 0 12 12" fill="none"><path d="M2 4.5 h6.5 v6 h-6.5 z" fill="#e8c050" stroke="#8a7020" stroke-width="0.7"/><path d="M2 4.5 l2 -3 h5 l-0.5 3" fill="#c8d4e8" stroke="#5a6888" stroke-width="0.7"/><path d="M8.5 4.5 l2 -1.5 v5.5 l-2 2" fill="#b89030" stroke="#8a7020" stroke-width="0.5"/></svg>
<svg style="left:650.5px;top:418.8px" width="11" height="11" viewBox="0 0 12 12" fill="none"><rect x="1.5" y="3" width="3.6" height="6.5" rx="0.8" fill="#3a4458" stroke="#1a2030" stroke-width="0.6"/><rect x="6.9" y="3" width="3.6" height="6.5" rx="0.8" fill="#3a4458" stroke="#1a2030" stroke-width="0.6"/><path d="M2.5 5 h1.6 M7.9 5 h1.6" stroke="#c8d4e8" stroke-width="0.8"/></svg>
<div class="grip" style="left:3.5px;top:438px;height:27px"></div><div class="grip" style="left:6.2px;top:438px;height:27px"></div>
<div id="cmd" class="abs mono">
<div style="top:0.5px"><i style="display:inline-block;font-style:normal;text-align:center;vertical-align:top;width:9.2px;font-size:7.3px">命</i><i style="display:inline-block;font-style:normal;text-align:center;vertical-align:top;width:9.2px;font-size:7.3px">令</i>: _-view <i style="display:inline-block;font-style:normal;text-align:center;vertical-align:top;width:9.2px;font-size:7.3px">输</i><i style="display:inline-block;font-style:normal;text-align:center;vertical-align:top;width:9.2px;font-size:7.3px">入</i><i style="display:inline-block;font-style:normal;text-align:center;vertical-align:top;width:9.2px;font-size:7.3px">选</i><i style="display:inline-block;font-style:normal;text-align:center;vertical-align:top;width:9.2px;font-size:7.3px">项</i> [?/<i style="display:inline-block;font-style:normal;text-align:center;vertical-align:top;width:9.2px;font-size:7.3px">正</i><i style="display:inline-block;font-style:normal;text-align:center;vertical-align:top;width:9.2px;font-size:7.3px">交</i>(O)/<i style="display:inline-block;font-style:normal;text-align:center;vertical-align:top;width:9.2px;font-size:7.3px">删</i><i style="display:inline-block;font-style:normal;text-align:center;vertical-align:top;width:9.2px;font-size:7.3px">除</i>(D)/<i style="display:inline-block;font-style:normal;text-align:center;vertical-align:top;width:9.2px;font-size:7.3px">恢</i><i style="display:inline-block;font-style:normal;text-align:center;vertical-align:top;width:9.2px;font-size:7.3px">复</i>(R)/<i style="display:inline-block;font-style:normal;text-align:center;vertical-align:top;width:9.2px;font-size:7.3px">保</i><i style="display:inline-block;font-style:normal;text-align:center;vertical-align:top;width:9.2px;font-size:7.3px">存</i>(S)/UCS(U)/<i style="display:inline-block;font-style:normal;text-align:center;vertical-align:top;width:9.2px;font-size:7.3px">窗</i><i style="display:inline-block;font-style:normal;text-align:center;vertical-align:top;width:9.2px;font-size:7.3px">口</i>(W)]:</div>
<div style="top:9px">_swiso <i style="display:inline-block;font-style:normal;text-align:center;vertical-align:top;width:9.2px;font-size:7.3px">正</i><i style="display:inline-block;font-style:normal;text-align:center;vertical-align:top;width:9.2px;font-size:7.3px">在</i><i style="display:inline-block;font-style:normal;text-align:center;vertical-align:top;width:9.2px;font-size:7.3px">重</i><i style="display:inline-block;font-style:normal;text-align:center;vertical-align:top;width:9.2px;font-size:7.3px">生</i><i style="display:inline-block;font-style:normal;text-align:center;vertical-align:top;width:9.2px;font-size:7.3px">成</i><i style="display:inline-block;font-style:normal;text-align:center;vertical-align:top;width:9.2px;font-size:7.3px">模</i><i style="display:inline-block;font-style:normal;text-align:center;vertical-align:top;width:9.2px;font-size:7.3px">型</i><i style="display:inline-block;font-style:normal;text-align:center;vertical-align:top;width:9.2px;font-size:7.3px">。</i></div>
<div class="abs" style="left:0;top:18.5px;width:642px;height:1px;background:#b8b6aa"></div>
<div style="top:19.5px"><i style="display:inline-block;font-style:normal;text-align:center;vertical-align:top;width:9.2px;font-size:7.3px">命</i><i style="display:inline-block;font-style:normal;text-align:center;vertical-align:top;width:9.2px;font-size:7.3px">令</i>:</div>
</div>
<div class="abs" style="left:650px;top:436px;width:10.5px;height:30px;background:#f6f5ef;border:1px solid #8a887c;border-left:none"></div>
<div class="sbtn" style="left:650.5px;top:437.0px;width:9.0px;height:9.0px"></div><svg style="left:650.5px;top:437.0px" width="9.0" height="9.0" viewBox="0 0 10 10" fill="none"><path d="M2.6 6.3 L5 3.8 L7.4 6.3" stroke="#3a4f94" stroke-width="1.7" transform="rotate(0 5 5)"/></svg>
<div class="sbtn" style="left:650.5px;top:446.5px;width:9.0px;height:9.0px"></div><svg style="left:650.5px;top:446.5px" width="9.0" height="9.0" viewBox="0 0 10 10" fill="none"><path d="M2.6 6.3 L5 3.8 L7.4 6.3" stroke="#3a4f94" stroke-width="1.7" transform="rotate(180 5 5)"/></svg>
<div class="abs" style="left:567.5px;top:452.3px;width:88px;height:12px;background:linear-gradient(#fafcfe,#dfe9f5);border:1px solid #9fb4cf;border-radius:2px;box-shadow:0 0 1px #bcd"></div>
<svg style="left:570px;top:454.5px" width="7" height="7" viewBox="0 0 7 7"><path d="M3.5 0.5 v3.5 M1.3 3.3 L3.5 6 L5.7 3.3 z" stroke="#2a9a2a" stroke-width="1" fill="#2a9a2a"/></svg>
<svg style="left:611.5px;top:454.5px" width="7" height="7" viewBox="0 0 7 7"><path d="M3.5 6.5 v-3.5 M1.3 3.7 L3.5 1 L5.7 3.7 z" stroke="#e0c028" stroke-width="1" fill="#e0c028"/></svg>
<div class="abs" style="left:590px;top:453.8px;font-size:6.8px;line-height:9px;color:#222;letter-spacing:-0.2px">0KB/S</div>
<div class="abs" style="left:632.5px;top:453.8px;font-size:6.8px;line-height:9px;color:#222;letter-spacing:-0.2px">0KB/S</div>
<div id="status" class="abs">
<div class="abs mono" style="left:2px;top:2px;width:146px;height:11.5px;border:1px solid;border-color:#a8a698 #fbfaf5 #fbfaf5 #a8a698;color:#c2bfb0;font-size:6.6px;line-height:10px;padding-left:2px;white-space:nowrap;text-shadow:0.6px 0.6px 0 #fff">132.0731, 932.1722, 0.0000</div>
<div class="sb" style="left:149.0px;width:17.0px"><i style="display:inline-block;font-style:normal;text-align:center;vertical-align:top;width:6.7px">捕</i><i style="display:inline-block;font-style:normal;text-align:center;vertical-align:top;width:6.7px">捉</i></div>
<div class="sb" style="left:167.0px;width:17.0px"><i style="display:inline-block;font-style:normal;text-align:center;vertical-align:top;width:6.7px">栅</i><i style="display:inline-block;font-style:normal;text-align:center;vertical-align:top;width:6.7px">格</i></div>
<div class="sb on" style="left:185.7px;width:17.3px"><i style="display:inline-block;font-style:normal;text-align:center;vertical-align:top;width:6.7px">正</i><i style="display:inline-block;font-style:normal;text-align:center;vertical-align:top;width:6.7px">交</i></div>
<div class="sb on2" style="left:204.7px;width:17.1px"><i style="display:inline-block;font-style:normal;text-align:center;vertical-align:top;width:6.7px">极</i><i style="display:inline-block;font-style:normal;text-align:center;vertical-align:top;width:6.7px">轴</i></div>
<div class="sb on" style="left:223.6px;width:30.1px"><i style="display:inline-block;font-style:normal;text-align:center;vertical-align:top;width:6.7px">对</i><i style="display:inline-block;font-style:normal;text-align:center;vertical-align:top;width:6.7px">象</i><i style="display:inline-block;font-style:normal;text-align:center;vertical-align:top;width:6.7px">捕</i><i style="display:inline-block;font-style:normal;text-align:center;vertical-align:top;width:6.7px">捉</i></div>
<div class="sb on" style="left:256.7px;width:29.8px"><i style="display:inline-block;font-style:normal;text-align:center;vertical-align:top;width:6.7px">对</i><i style="display:inline-block;font-style:normal;text-align:center;vertical-align:top;width:6.7px">象</i><i style="display:inline-block;font-style:normal;text-align:center;vertical-align:top;width:6.7px">追</i><i style="display:inline-block;font-style:normal;text-align:center;vertical-align:top;width:6.7px">踪</i></div>
<div class="sb" style="left:288.5px;width:17.0px"><i style="display:inline-block;font-style:normal;text-align:center;vertical-align:top;width:6.7px">线</i><i style="display:inline-block;font-style:normal;text-align:center;vertical-align:top;width:6.7px">宽</i></div>
<div class="sb on" style="left:307.0px;width:16.5px"><i style="display:inline-block;font-style:normal;text-align:center;vertical-align:top;width:6.7px">模</i><i style="display:inline-block;font-style:normal;text-align:center;vertical-align:top;width:6.7px">型</i></div>
<svg style="left:643.5px;top:2px" width="11" height="11" viewBox="0 0 11 11"><rect x="0.5" y="0.5" width="10" height="10" fill="#f4f3ea" stroke="#c8c5b4" stroke-width="0.6"/><path d="M3 2 l2.5 2 l2.5 -2 v3 h-5 z" fill="#3a4a9a"/><rect x="4" y="5.5" width="4.5" height="4.5" fill="#e8c828" stroke="#7a6a18" stroke-width="0.5"/><circle cx="4" cy="3.2" r="1.2" fill="#8a3a8a"/></svg>
<svg style="left:657px;top:6px" width="6" height="4" viewBox="0 0 6 4"><path d="M0.5 0.5 h5 l-2.5 3 z" fill="#111"/></svg>
</div>
<div id="taskbar" class="abs">
<div id="start" class="abs"><span>Start</span></div>
<svg style="left:4.5px;top:2.8px" width="13.5" height="13.5" viewBox="0 0 12 12"><path d="M1.2 2.2 q2 -1.2 4 -0.2 l-0.6 3.6 q-2 -1 -4 0.2 z" fill="#e85a2a"/><path d="M6.2 2.3 q2 1 4.2 -0.3 l-0.6 3.6 q-2.2 1.3 -4.2 0.3 z" fill="#7ac83a"/><path d="M0.5 6.6 q2 -1.2 4 -0.2 l-0.6 3.6 q-2 -1 -4 0.2 z" fill="#4a8ae8"/><path d="M5.5 6.7 q2 1 4.2 -0.3 l-0.6 3.6 q-2.2 1.3 -4.2 0.3 z" fill="#f0d030"/></svg>
<svg style="left:66.5px;top:4px" width="11" height="11" viewBox="0 0 11 11"><circle cx="5.5" cy="5.5" r="4.3" fill="#bcd8f8" stroke="#dceafc" stroke-width="0.8"/><path d="M3 5.5 h5 q0 -2.5 -2.5 -2.5 q-2.5 0 -2.5 2.5 q0 2.6 2.5 2.6 q1.6 0 2.3 -1.2" stroke="#2a5ac8" stroke-width="1.3" fill="none"/></svg>
<svg style="left:80px;top:4px" width="11" height="11" viewBox="0 0 11 11"><rect x="1" y="2" width="9" height="7.5" fill="#f4f6fa" stroke="#c8d0e0" stroke-width="0.6"/><rect x="1" y="2" width="9" height="2.5" fill="#1a1a2a"/><path d="M2 9 l3 -2" stroke="#8a98b8" stroke-width="0.8"/></svg>
<svg style="left:93.3px;top:4px" width="11" height="11" viewBox="0 0 11 11"><rect x="1" y="1.5" width="9" height="8.5" fill="#2a7a4a" stroke="#cfe0d8" stroke-width="0.7"/><path d="M2.5 3 l3 2.5 l-3 2.5" stroke="#e8f4ec" stroke-width="1.1" fill="none"/><rect x="6" y="6" width="3.5" height="3" fill="#d8e8f0"/></svg>
<div class="abs" style="left:110px;top:3px;color:#dfe8fa;font-size:6.5px;line-height:8px;letter-spacing:-0.5px">&#187;</div>
<div class="task" style="left:125px;width:93px;background:linear-gradient(#6a8cdc 0%,#3d66c2 12%,#2f55ae 40%,#2a4ca2 100%);box-shadow:inset 0 0 0 0.5px #4a70c8"><i style="display:inline-block;font-style:normal;text-align:center;vertical-align:top;width:7.5px">新</i><i style="display:inline-block;font-style:normal;text-align:center;vertical-align:top;width:7.5px">建</i> Microsoft Word ...</div>
<svg style="left:128.5px;top:4px" width="11" height="11" viewBox="0 0 11 11"><rect x="2.5" y="1" width="7.5" height="9" fill="#f4f7fd" stroke="#9ab0d8" stroke-width="0.6"/><rect x="0.8" y="3" width="6" height="5.5" fill="#2a5ab8"/><path d="M1.8 4.2 l0.9 3.2 l1 -2.6 l1 2.6 l0.9 -3.2" stroke="#fff" stroke-width="0.8" fill="none"/></svg>
<div class="task" style="left:219.5px;width:89px;padding-left:16px;background:linear-gradient(#1a3278,#1c3682 30%,#1f3b8c);box-shadow:inset 0.6px 0.6px 1px #11245e">AutoCAD 2004 - [Dra...</div>
<svg style="left:223.5px;top:4.5px" width="10" height="10" viewBox="0 0 10 10"><rect x="0.5" y="0.5" width="9" height="9" fill="#f4f8fc" stroke="#b8d0e8" stroke-width="0.6"/><rect x="1.8" y="1.8" width="6.4" height="6.4" fill="#4aa4d0"/><path d="M3.4 4 h2.8 v3 h-2.8 z M3.4 5 h2" fill="#f4f8fc"/></svg>
<svg style="left:584px;top:3.5px" width="11" height="11" viewBox="0 0 11 11"><rect x="0.8" y="4" width="9.4" height="5" rx="0.8" fill="#e4e8f0" stroke="#8a94a8" stroke-width="0.6"/><path d="M2 5.5 h7 M2 7.3 h7" stroke="#3a4458" stroke-width="0.9" stroke-dasharray="1 0.6"/></svg>
<svg style="left:597px;top:6px" width="4" height="6" viewBox="0 0 4 6"><path d="M3.5 0.5 L0.8 3 L3.5 5.5 z" fill="#e8eefa"/></svg>
<svg style="left:604.5px;top:3px" width="12" height="12" viewBox="0 0 12 12"><rect x="1" y="1" width="6.5" height="5" fill="#7aa8e8" stroke="#e8eefa" stroke-width="0.7"/><rect x="4.5" y="5" width="6.5" height="5" fill="#4a78c8" stroke="#e8eefa" stroke-width="0.7"/><circle cx="9.5" cy="3" r="1.6" fill="#d84a3a"/></svg>
<svg style="left:616px;top:3px" width="12" height="12" viewBox="0 0 12 12"><rect x="1" y="2" width="7" height="5.5" fill="#c8d4e8" stroke="#5a6888" stroke-width="0.7"/><path d="M3 9.5 h5 M5.5 7.5 v2" stroke="#c8d4e8" stroke-width="1"/><path d="M7 3 l4 5" stroke="#f0d8a0" stroke-width="1.6"/></svg>
<svg style="left:627.5px;top:3.5px" width="12" height="12" viewBox="0 0 12 12"><path d="M1 7 q0 -4 4.5 -4.5 q5 -0.5 5.5 3 q0.3 3.5 -4.5 4 q-5 0.5 -5.5 -2.5 z" fill="#f0a020" stroke="#f8d890" stroke-width="0.6"/><circle cx="7" cy="6" r="1.6" fill="#f8e060"/></svg>
<div class="abs" style="left:641px;top:4.5px;color:#fff;font-size:7.2px;line-height:9px;letter-spacing:-0.1px">13:41</div>
</div>
</div>
</body>
</html>
